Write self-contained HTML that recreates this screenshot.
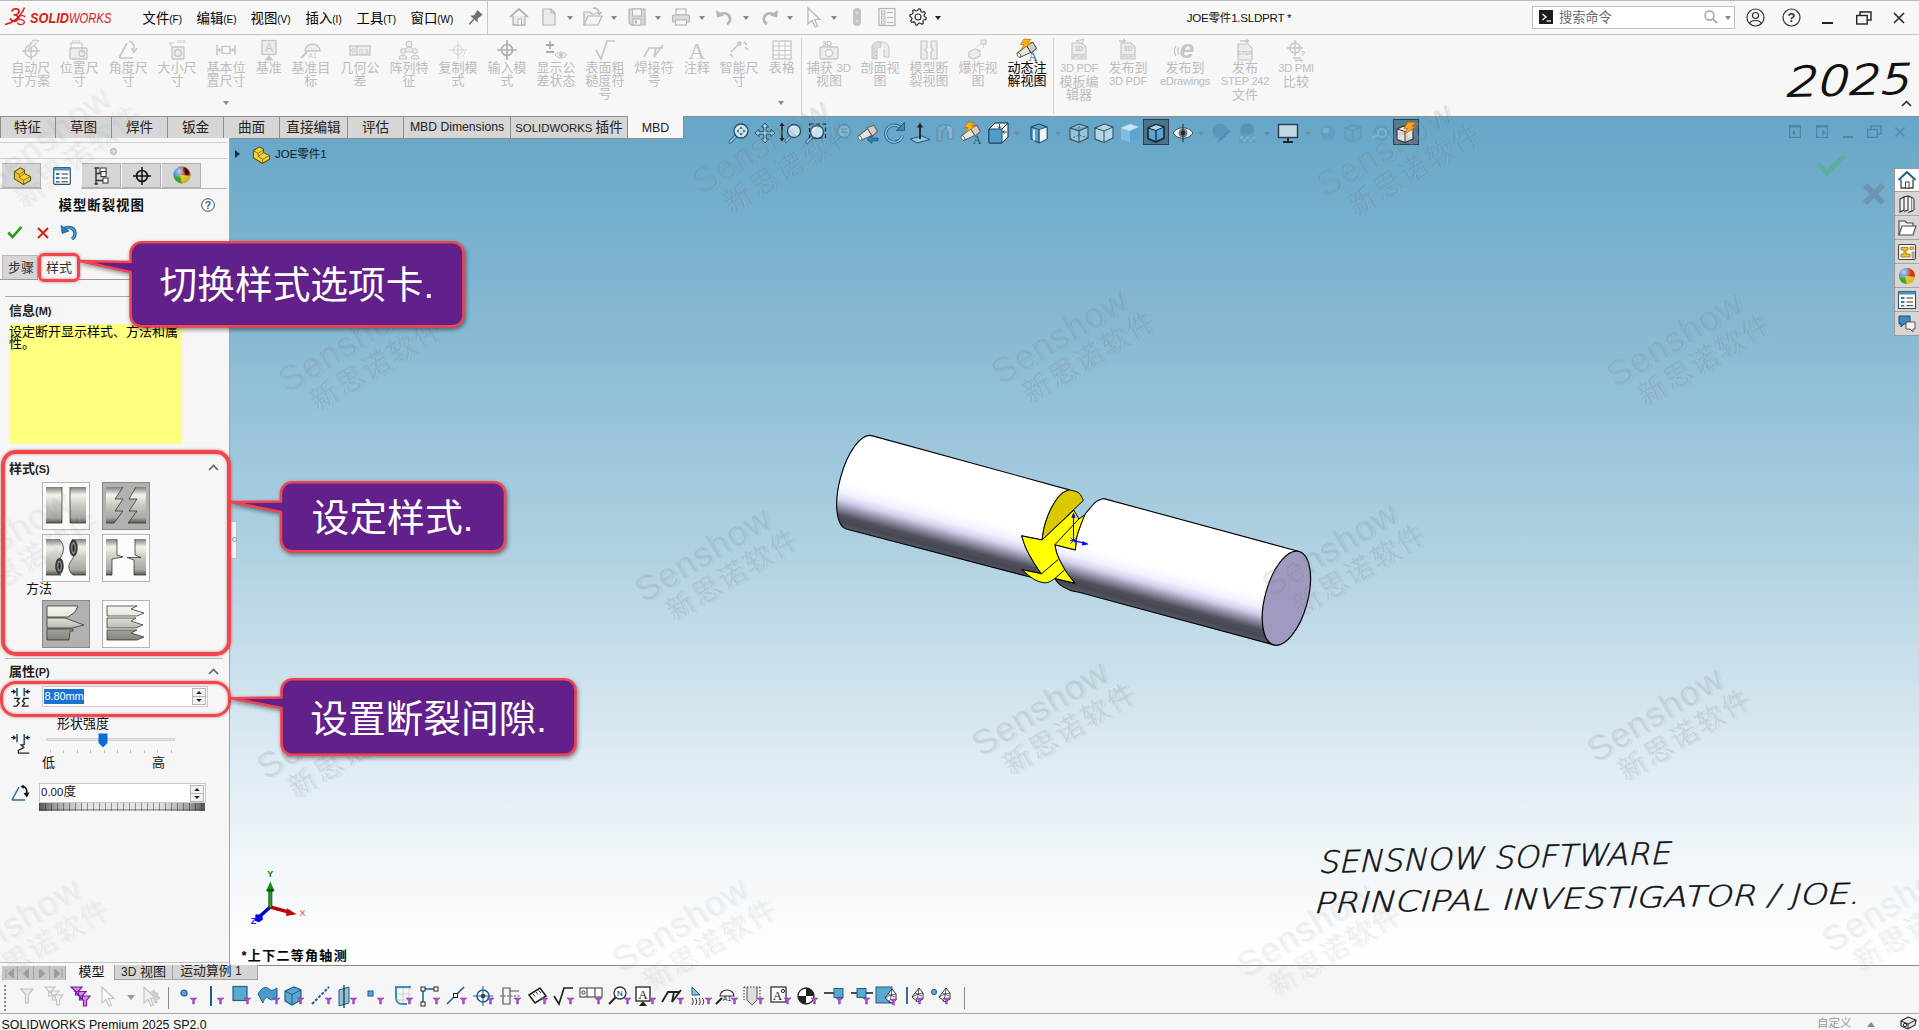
<!DOCTYPE html><html lang="zh-CN"><head><meta charset="utf-8"><title>SOLIDWORKS</title><style>
html,body{margin:0;padding:0}
body{width:1919px;height:1030px;position:relative;overflow:hidden;background:#f7f7f7;font-family:"Liberation Sans","Noto Sans CJK SC",sans-serif;font-size:13px;color:#000;line-height:1}
.a{position:absolute}
.t{position:absolute;white-space:nowrap;line-height:1}
.c{position:absolute;white-space:nowrap;line-height:1;transform:translateX(-50%);text-align:center}
svg{position:absolute;overflow:visible}
.rl{position:absolute;transform:translateX(-50%);text-align:center;white-space:nowrap;font-size:13px;line-height:13px;color:#bdbdbd;top:61px}
.tab{position:absolute;top:116px;height:21px;border:1px solid #8e8e8e;border-left:none;background:#d6d6d6;box-sizing:content-box;text-align:center;font-size:13.6px;line-height:21.5px;color:#222}
.wm{position:absolute;transform:translate(-50%,-50%) rotate(-31deg);text-align:center;white-space:nowrap;font-size:28px;line-height:31px;color:rgba(255,255,255,.09);text-shadow:-1px -1px 0 rgba(60,80,95,.12),1px 1px 0 rgba(60,80,95,.07);pointer-events:none}
.co{position:absolute;background:#62218a;border:2.5px solid #ee4450;border-radius:11px;color:#fff;box-sizing:border-box;box-shadow:2px 3px 5px rgba(0,0,0,.35);white-space:nowrap}
.hl{position:absolute;border:3.5px solid #f4444c;box-sizing:border-box;box-shadow:0 0 3px rgba(120,0,0,.5), inset 0 0 3px rgba(120,0,0,.4)}
</style></head><body>
<div class="a" style="left:229px;top:117px;width:1690px;height:848px;background:linear-gradient(to bottom,#66a6c8 0%,#87b9d3 25%,#aed0e1 50%,#d4e5ef 70%,#e4eff5 80%,#f4f8fb 90%,#ffffff 100%)"></div>
<div class="a" style="left:0;top:0;width:1919px;height:1px;background:#b9b9b9"></div>
<div class="a" style="left:0;top:34px;width:1919px;height:1px;background:#c3c3c3"></div>
<div class="a" style="left:487px;top:1px;width:1px;height:33px;background:#c9c9c9"></div>
<svg style="left:4px;top:3px" width="112" height="26" viewBox="0 0 112 26">
<path d="M1 21.500C8 20.500 17 14 20.500 4.500" fill="none" stroke="#d8201a" stroke-width="1.500"/>
<text x="5" y="19" font-family="Liberation Sans,sans-serif" font-style="italic" font-size="20" fill="#d8201a">3</text>
<text x="12.500" y="21.500" font-family="Liberation Sans,sans-serif" font-style="italic" font-size="14" fill="#d8201a">S</text>
<text x="26" y="20.300" font-family="Liberation Sans,sans-serif" font-style="italic" font-weight="bold" font-size="14" fill="#d8201a" textLength="39" lengthAdjust="spacingAndGlyphs">SOLID</text>
<text x="65" y="20.300" font-family="Liberation Sans,sans-serif" font-style="italic" font-size="14" fill="#d8201a" textLength="42.500" lengthAdjust="spacingAndGlyphs">WORKS</text>
</svg>
<div class="t" style="left:142.5px;top:11.5px;font-size:13.4px">文件<span style="font-size:10px">(F)</span></div>
<div class="t" style="left:196.5px;top:11.5px;font-size:13.4px">编辑<span style="font-size:10px">(E)</span></div>
<div class="t" style="left:250.5px;top:11.5px;font-size:13.4px">视图<span style="font-size:10px">(V)</span></div>
<div class="t" style="left:305.5px;top:11.5px;font-size:13.4px">插入<span style="font-size:10px">(I)</span></div>
<div class="t" style="left:356.5px;top:11.5px;font-size:13.4px">工具<span style="font-size:10px">(T)</span></div>
<div class="t" style="left:410.5px;top:11.5px;font-size:13.4px">窗口<span style="font-size:10px">(W)</span></div>
<div class="c" style="left:1239px;top:12px;font-size:11.6px;letter-spacing:-.25px;color:#111">JOE零件1.SLDPRT *</div>
<div class="a" style="left:1532px;top:6px;width:201px;height:21px;border:1px solid #bdbdbd;background:#fff"></div>
<div class="a" style="left:1539px;top:10px;width:14px;height:14px;background:#1c1c1c"></div>
<div class="t" style="left:1559px;top:11px;font-size:13.2px;color:#6a6a6a">搜索命令</div>
<svg style="left:466.0px;top:8.5px" width="18" height="18" viewBox="0 0 18 18"><g transform="rotate(42 9 9)"><path d="M5.500 1.500H12.500L11.300 7.500L14 10.500H4L6.700 7.500Z" fill="#707070"/><path d="M9 10.500V17.500" stroke="#707070" stroke-width="1.500"/></g></svg>
<svg style="left:507.5px;top:6.0px" width="22" height="22" viewBox="0 0 22 22"><path d="M2 11L11 3L20 11" fill="none" stroke="#b4b4b4" stroke-width="1.800"/><path d="M5 10V19H17V10" fill="#ececec" stroke="#b4b4b4" stroke-width="1.300"/><rect x="10" y="13" width="3.500" height="6" fill="#fff" stroke="#b4b4b4"/></svg>
<svg style="left:538.0px;top:6.0px" width="22" height="22" viewBox="0 0 22 22"><path d="M5 3H13L17 7V19H5Z" fill="#ececec" stroke="#b4b4b4" stroke-width="1.200"/><path d="M13 3V7H17" fill="none" stroke="#b4b4b4"/></svg>
<svg style="left:567px;top:16px" width="6" height="4" viewBox="0 0 6 4"><path d="M0 0H6L3 4Z" fill="#8a8a8a"/></svg>
<svg style="left:581.5px;top:6.0px" width="22" height="22" viewBox="0 0 22 22"><path d="M2 19V6H8L10 8H14" fill="#ececec" stroke="#b4b4b4" stroke-width="1.200"/><path d="M2 19L6 10H20L16 19Z" fill="#f4f4f4" stroke="#b4b4b4" stroke-width="1.200"/><path d="M11 2C15 2 17 4 17 7M14.500 6L17 8.500L19.500 6" fill="none" stroke="#b4b4b4" stroke-width="1.300"/></svg>
<svg style="left:611px;top:16px" width="6" height="4" viewBox="0 0 6 4"><path d="M0 0H6L3 4Z" fill="#8a8a8a"/></svg>
<svg style="left:626.0px;top:6.0px" width="22" height="22" viewBox="0 0 22 22"><path d="M3 3H19V19H5L3 17Z" fill="#d9d9d9" stroke="#b4b4b4" stroke-width="1.200"/><rect x="6.500" y="3" width="9" height="7" fill="#f4f4f4" stroke="#b4b4b4"/><rect x="7" y="13" width="8" height="6" fill="#f4f4f4" stroke="#b4b4b4"/><rect x="9" y="14.500" width="2" height="3" fill="#b4b4b4"/></svg>
<svg style="left:655px;top:16px" width="6" height="4" viewBox="0 0 6 4"><path d="M0 0H6L3 4Z" fill="#8a8a8a"/></svg>
<svg style="left:670.0px;top:6.0px" width="22" height="22" viewBox="0 0 22 22"><rect x="6" y="3" width="10" height="6" fill="#f8f8f8" stroke="#b4b4b4" stroke-width="1.100"/><rect x="2.500" y="9" width="17" height="7" rx="1" fill="#dcdcdc" stroke="#b4b4b4" stroke-width="1.100"/><rect x="5.500" y="14" width="11" height="5" fill="#f8f8f8" stroke="#b4b4b4" stroke-width="1.100"/></svg>
<svg style="left:699px;top:16px" width="6" height="4" viewBox="0 0 6 4"><path d="M0 0H6L3 4Z" fill="#8a8a8a"/></svg>
<svg style="left:714.0px;top:6.0px" width="22" height="22" viewBox="0 0 22 22"><path d="M5 9C9 6 15 7 16 12C16.500 15 15 17 13 18" fill="none" stroke="#b4b4b4" stroke-width="2.600"/><path d="M2 4L3 11.500L10 9.500Z" fill="#b4b4b4"/></svg>
<svg style="left:743px;top:16px" width="6" height="4" viewBox="0 0 6 4"><path d="M0 0H6L3 4Z" fill="#8a8a8a"/></svg>
<svg style="left:758.0px;top:6.0px" width="22" height="22" viewBox="0 0 22 22"><path d="M17 9C13 6 7 7 6 12C5.500 15 7 17 9 18" fill="none" stroke="#b4b4b4" stroke-width="2.600"/><path d="M20 4L19 11.500L12 9.500Z" fill="#b4b4b4"/></svg>
<svg style="left:787px;top:16px" width="6" height="4" viewBox="0 0 6 4"><path d="M0 0H6L3 4Z" fill="#8a8a8a"/></svg>
<svg style="left:801.0px;top:6.0px" width="22" height="22" viewBox="0 0 22 22"><path d="M7 2V18L11 14.500L14 21L16.500 20L13.500 13.500H19Z" fill="#fafafa" stroke="#b4b4b4" stroke-width="1.200"/></svg>
<svg style="left:831px;top:16px" width="6" height="4" viewBox="0 0 6 4"><path d="M0 0H6L3 4Z" fill="#8a8a8a"/></svg>
<svg style="left:846.0px;top:6.0px" width="22" height="22" viewBox="0 0 22 22"><rect x="7" y="2" width="8" height="18" rx="4" fill="#c4c4c4"/><circle cx="11" cy="7" r="1.300" fill="#ddd"/><circle cx="11" cy="15" r="1.300" fill="#ddd"/></svg>
<svg style="left:876.0px;top:6.0px" width="22" height="22" viewBox="0 0 22 22"><rect x="3" y="2.500" width="16" height="17" fill="#f6f6f6" stroke="#b4b4b4" stroke-width="1.200"/><rect x="5.500" y="5" width="3.500" height="3" fill="none" stroke="#b4b4b4"/><rect x="5.500" y="10" width="3.500" height="3" fill="none" stroke="#b4b4b4"/><rect x="5.500" y="15" width="3.500" height="3" fill="none" stroke="#b4b4b4"/><path d="M11 6.500H17M11 11.500H17M11 16.500H17" stroke="#b4b4b4"/></svg>
<svg style="left:906.5px;top:6.0px" width="22" height="22" viewBox="0 0 22 22"><path d="M19.26 11.81L18.94 13.41L16.56 13.97L15.87 15.00L16.27 17.42L14.91 18.32L12.83 17.03L11.62 17.27L10.19 19.26L8.59 18.94L8.03 16.56L7.00 15.87L4.58 16.27L3.68 14.91L4.97 12.83L4.73 11.62L2.74 10.19L3.06 8.59L5.44 8.03L6.13 7.00L5.73 4.58L7.09 3.68L9.17 4.97L10.38 4.73L11.81 2.74L13.41 3.06L13.97 5.44L15.00 6.13L17.42 5.73L18.32 7.09L17.03 9.17L17.27 10.38Z" fill="#fafafa" stroke="#2a2a2a" stroke-width="1.200" stroke-linejoin="round"/><circle cx="11" cy="11" r="3" fill="#fafafa" stroke="#2a2a2a" stroke-width="1.200"/></svg>
<svg style="left:935px;top:16px" width="6" height="4" viewBox="0 0 6 4"><path d="M0 0H6L3 4Z" fill="#222"/></svg>
<svg style="left:1540.500px;top:11.500px" width="11" height="11" viewBox="0 0 11 11"><path d="M1.500 2L5 5L1.500 8" fill="none" stroke="#fff" stroke-width="1.400"/><path d="M5.500 9H10" stroke="#fff" stroke-width="1.300"/></svg>
<svg style="left:1703px;top:9px" width="16" height="16" viewBox="0 0 16 16"><circle cx="6.500" cy="6.500" r="4.500" fill="none" stroke="#9a9a9a" stroke-width="1.300"/><path d="M9.800 9.800L14 14" stroke="#9a9a9a" stroke-width="1.600"/></svg>
<svg style="left:1724.5px;top:16px" width="6" height="4" viewBox="0 0 6 4"><path d="M0 0H6L3 4Z" fill="#888"/></svg>
<svg style="left:1746px;top:8px" width="19" height="19" viewBox="0 0 19 19"><circle cx="9.500" cy="9.500" r="8.500" fill="none" stroke="#333" stroke-width="1.200"/><circle cx="9.500" cy="7.500" r="3" fill="none" stroke="#333" stroke-width="1.200"/><path d="M3.800 15.500C5 11.500 14 11.500 15.200 15.500" fill="none" stroke="#333" stroke-width="1.200"/></svg>
<svg style="left:1782px;top:8px" width="19" height="19" viewBox="0 0 19 19"><circle cx="9.500" cy="9.500" r="8.500" fill="none" stroke="#333" stroke-width="1.200"/><text x="9.500" y="14" font-family="Liberation Sans,sans-serif" font-size="13" font-weight="bold" text-anchor="middle" fill="#333">?</text></svg>
<div class="a" style="left:1822px;top:22px;width:11px;height:2px;background:#222"></div>
<svg style="left:1856px;top:11px" width="16" height="14" viewBox="0 0 16 14"><path d="M4 4V1H15V9H11" fill="none" stroke="#222" stroke-width="1.400"/><rect x=".7" y="4.500" width="10.500" height="8.500" fill="none" stroke="#222" stroke-width="1.400"/></svg>
<svg style="left:1893px;top:12px" width="12" height="12" viewBox="0 0 12 12"><path d="M1 1L11 11M11 1L1 11" stroke="#222" stroke-width="1.500"/></svg>
<svg style="left:1901px;top:100px" width="11" height="7" viewBox="0 0 11 7"><path d="M1 6L5.500 1.500L10 6" fill="none" stroke="#222" stroke-width="1.500"/></svg>
<div class="rl" style="left:30.7px;color:#bdbdbd">自动尺<br>寸方案</div>
<div class="rl" style="left:79.3px;color:#bdbdbd">位置尺<br>寸</div>
<div class="rl" style="left:128.3px;color:#bdbdbd">角度尺<br>寸</div>
<div class="rl" style="left:177px;color:#bdbdbd">大小尺<br>寸</div>
<div class="rl" style="left:226px;color:#bdbdbd">基本位<br>置尺寸</div>
<div class="rl" style="left:268.7px;color:#bdbdbd">基准</div>
<div class="rl" style="left:310.7px;color:#bdbdbd">基准目<br>标</div>
<div class="rl" style="left:360px;color:#bdbdbd">几何公<br>差</div>
<div class="rl" style="left:409px;color:#bdbdbd">阵列特<br>征</div>
<div class="rl" style="left:458px;color:#bdbdbd">复制模<br>式</div>
<div class="rl" style="left:507px;color:#bdbdbd">输入模<br>式</div>
<div class="rl" style="left:556px;color:#bdbdbd">显示公<br>差状态</div>
<div class="rl" style="left:605px;color:#bdbdbd">表面粗<br>糙度符<br>号</div>
<div class="rl" style="left:654px;color:#bdbdbd">焊接符<br>号</div>
<div class="rl" style="left:696.7px;color:#bdbdbd">注释</div>
<div class="rl" style="left:739px;color:#bdbdbd">智能尺<br>寸</div>
<div class="rl" style="left:781.7px;color:#bdbdbd">表格</div>
<div class="rl" style="left:829px;color:#bdbdbd">捕获 <span style="font-size:11.6px">3D</span><br>视图</div>
<div class="rl" style="left:880px;color:#bdbdbd">剖面视<br>图</div>
<div class="rl" style="left:929px;color:#bdbdbd">模型断<br>裂视图</div>
<div class="rl" style="left:978px;color:#bdbdbd">爆炸视<br>图</div>
<div class="rl" style="left:1027px;color:#000">动态注<br>解视图</div>
<div class="rl" style="left:1079px;color:#bdbdbd"><span style="font-size:11.2px;letter-spacing:-.3px">3D PDF</span><br>模板编<br>辑器</div>
<div class="rl" style="left:1128px;color:#bdbdbd">发布到<br><span style="font-size:11.2px;letter-spacing:-.3px">3D PDF</span></div>
<div class="rl" style="left:1185px;color:#bdbdbd">发布到<br><span style="font-size:11.2px;letter-spacing:-.3px">eDrawings</span></div>
<div class="rl" style="left:1245px;color:#bdbdbd">发布<br><span style="font-size:11.2px;letter-spacing:-.3px">STEP 242</span><br>文件</div>
<div class="rl" style="left:1296px;color:#bdbdbd"><span style="font-size:11.2px;letter-spacing:-.3px">3D PMI</span><br>比较</div>
<div class="a" style="left:801px;top:38px;width:1px;height:76px;background:#d0d0d0"></div>
<div class="a" style="left:1053px;top:38px;width:1px;height:76px;background:#d0d0d0"></div>
<svg style="left:18.7px;top:38px" width="24" height="24" viewBox="0 0 24 24"><circle cx="12" cy="13" r="6" fill="none" stroke="#c6c6c6" stroke-width="1.500"/><path d="M12 4V22M3 13H21" stroke="#c6c6c6" stroke-width="1.500"/><path d="M14 2L20 2.500L16 7L9 12Z" fill="#ececec" stroke="#c6c6c6"/></svg>
<svg style="left:67.3px;top:38px" width="24" height="24" viewBox="0 0 24 24"><rect x="3" y="10" width="17" height="11" rx="1" fill="#ececec" stroke="#c6c6c6" stroke-width="1.300"/><circle cx="15" cy="15.500" r="3" fill="none" stroke="#c6c6c6" stroke-width="1.300"/><path d="M15 15.500V5H4V10" fill="none" stroke="#c6c6c6"/><text x="9" y="5" font-size="6" font-family="Liberation Sans,sans-serif" text-anchor="middle" fill="#c6c6c6">xxx</text></svg>
<svg style="left:116.3px;top:38px" width="24" height="24" viewBox="0 0 24 24"><path d="M3 20H17M3 20L11 5" fill="none" stroke="#c6c6c6" stroke-width="1.600"/><path d="M13 3C17 4 18.500 7 18 11M15.500 10L18 14L21 10" fill="none" stroke="#c6c6c6" stroke-width="1.600"/></svg>
<svg style="left:165.0px;top:38px" width="24" height="24" viewBox="0 0 24 24"><rect x="7" y="9" width="12" height="12" rx="1" fill="#ececec" stroke="#c6c6c6" stroke-width="1.300"/><circle cx="13" cy="15" r="3.300" fill="none" stroke="#c6c6c6" stroke-width="1.300"/><path d="M7 9L4 5H9" fill="none" stroke="#c6c6c6"/><text x="16" y="5" font-size="6" font-family="Liberation Sans,sans-serif" text-anchor="middle" fill="#c6c6c6">xxx</text></svg>
<svg style="left:214.0px;top:38px" width="24" height="24" viewBox="0 0 24 24"><path d="M3 7V17M21 7V17M3 12H8M16 12H21" stroke="#c6c6c6" stroke-width="1.500"/><rect x="8" y="8.500" width="8" height="7" fill="none" stroke="#c6c6c6" stroke-width="1.300"/><path d="M3 12l3-2v4zM21 12l-3-2v4z" fill="#c6c6c6"/></svg>
<svg style="left:256.7px;top:38px" width="24" height="24" viewBox="0 0 24 24"><rect x="5" y="2.500" width="14" height="14" fill="#ececec" stroke="#c6c6c6" stroke-width="1.300"/><text x="12" y="14" font-size="12" font-family="Liberation Sans,sans-serif" text-anchor="middle" fill="#c6c6c6">A</text><path d="M12 16.500V19M8.500 22L12 18L15.500 22Z" fill="#c6c6c6" stroke="#c6c6c6"/></svg>
<svg style="left:298.7px;top:38px" width="24" height="24" viewBox="0 0 24 24"><path d="M6 13A7.500 7 0 0 1 21 13Z" fill="#ececec" stroke="#c6c6c6" stroke-width="1.300"/><path d="M8 14L2 20" stroke="#c6c6c6" stroke-width="2"/><text x="13.500" y="19.500" font-size="7" font-family="Liberation Sans,sans-serif" text-anchor="middle" fill="#c6c6c6">A1</text></svg>
<svg style="left:348.0px;top:38px" width="24" height="24" viewBox="0 0 24 24"><rect x="2" y="8" width="20" height="9" fill="#ececec" stroke="#c6c6c6" stroke-width="1.300"/><path d="M9 8V17" stroke="#c6c6c6"/><circle cx="5.500" cy="12.500" r="1.800" fill="none" stroke="#c6c6c6"/><text x="15.500" y="15.500" font-size="7" font-family="Liberation Sans,sans-serif" text-anchor="middle" fill="#c6c6c6">0.3</text></svg>
<svg style="left:397.0px;top:38px" width="24" height="24" viewBox="0 0 24 24"><circle cx="12" cy="6" r="3" fill="#ececec" stroke="#c6c6c6"/><path d="M7 14A5 5 0 0 1 17 14Z" fill="#ececec" stroke="#c6c6c6"/><circle cx="6" cy="13" r="2.500" fill="#ececec" stroke="#c6c6c6"/><circle cx="18" cy="13" r="2.500" fill="#ececec" stroke="#c6c6c6"/><path d="M2 21A4 4 0 0 1 10 21ZM14 21A4 4 0 0 1 22 21Z" fill="#ececec" stroke="#c6c6c6"/></svg>
<svg style="left:446.0px;top:38px;opacity:0.7" width="24" height="24" viewBox="0 0 24 24"><circle cx="12" cy="12" r="4.500" fill="none" stroke="#c6c6c6"/><path d="M12 3V21M3 12H21" stroke="#c6c6c6"/><circle cx="15" cy="15" r="3.500" fill="none" stroke="#c6c6c6" stroke-dasharray="1.500 1"/></svg>
<svg style="left:495.0px;top:38px" width="24" height="24" viewBox="0 0 24 24"><circle cx="12" cy="12" r="5.500" fill="none" stroke="#b0b0b0" stroke-width="1.700"/><path d="M12 2V22M2 12H22" stroke="#b0b0b0" stroke-width="1.700"/></svg>
<svg style="left:544.0px;top:38px" width="24" height="24" viewBox="0 0 24 24"><path d="M6 3V11M2 7H10M2 14H10" stroke="#aaa" stroke-width="1.800"/><path d="M11 17C14 13 20 13 23 17C20 21 14 21 11 17Z" fill="#ececec" stroke="#c6c6c6"/><circle cx="17" cy="17" r="2" fill="#c6c6c6"/></svg>
<svg style="left:593.0px;top:38px" width="24" height="24" viewBox="0 0 24 24"><path d="M3 12L8 21L14 3H22" fill="none" stroke="#c6c6c6" stroke-width="1.700"/></svg>
<svg style="left:642.0px;top:38px" width="24" height="24" viewBox="0 0 24 24"><path d="M2 19L7 10H21M14 10L12 19L21 7" fill="none" stroke="#c6c6c6" stroke-width="1.700"/></svg>
<svg style="left:684.7px;top:38px" width="24" height="24" viewBox="0 0 24 24"><text x="12" y="21" font-size="24" font-family="Liberation Serif,serif" text-anchor="middle" fill="#c6c6c6">A</text></svg>
<svg style="left:727.0px;top:38px" width="24" height="24" viewBox="0 0 24 24"><path d="M4 14L14 4M14 4L10 5M14 4L13 8M18 9L21 12M17 4L20 7" stroke="#c6c6c6" stroke-width="1.600" fill="none"/><path d="M3 16L6 19" stroke="#c6c6c6" stroke-width="1.600"/></svg>
<svg style="left:769.7px;top:38px" width="24" height="24" viewBox="0 0 24 24"><rect x="3" y="3" width="18" height="18" fill="#fafafa" stroke="#c6c6c6" stroke-width="1.300"/><path d="M3 8H21M3 12.500H21M3 17H21M9 3V21M15 3V21" stroke="#c6c6c6"/></svg>
<svg style="left:817.0px;top:38px" width="24" height="24" viewBox="0 0 24 24"><rect x="3" y="9" width="18" height="12" rx="1.500" fill="#ececec" stroke="#c6c6c6" stroke-width="1.300"/><circle cx="12" cy="15" r="3.500" fill="#fafafa" stroke="#c6c6c6" stroke-width="1.300"/><text x="10" y="8" font-size="8" font-weight="bold" font-family="Liberation Sans,sans-serif" text-anchor="middle" fill="#c6c6c6">3D</text></svg>
<svg style="left:868.0px;top:38px" width="24" height="24" viewBox="0 0 24 24"><path d="M4 10C4 5 9 3 13 4V9C11 9 9 10 9 12V21H4Z" fill="#dedede" stroke="#c6c6c6"/><path d="M13 4C18 4 21 7 21 10V19H16V11" fill="#ececec" stroke="#c6c6c6"/><path d="M5 12l3-3M5 16l3-3M5 20l3-3" stroke="#c6c6c6"/></svg>
<svg style="left:917.0px;top:38px" width="24" height="24" viewBox="0 0 24 24"><path d="M4 3H10V9L8 12L10 14V21H4Z" fill="#ececec" stroke="#c6c6c6" stroke-width="1.200"/><path d="M20 3H14V9L16 12L14 14V21H20Z" fill="#ececec" stroke="#c6c6c6" stroke-width="1.200"/></svg>
<svg style="left:966.0px;top:38px" width="24" height="24" viewBox="0 0 24 24"><path d="M3 14L9 11L14 13V18L8 21L3 19Z" fill="#ececec" stroke="#c6c6c6" stroke-width="1.200"/><rect x="15" y="2" width="5" height="4" fill="#ececec" stroke="#c6c6c6"/><path d="M17.500 6V10M11 9L14 6" stroke="#c6c6c6" stroke-dasharray="1.500 1"/></svg>
<svg style="left:1015.0px;top:38px" width="24" height="24" viewBox="0 0 24 24"><g transform="rotate(-32 12 12)"><path d="M2 9.500L14 8V16L2 14.500Z" fill="#e6e6e0" stroke="#444" stroke-width=".9"/><path d="M14 7L21 8.500V15.500L14 17Z" fill="#cfcfc8" stroke="#444" stroke-width=".9"/><ellipse cx="2.500" cy="12" rx="1.600" ry="2.600" fill="#fff" stroke="#444" stroke-width=".8"/></g><path d="M9 1L16 1.500L12.500 5H16.500L6 12L9 6.500H5.500Z" fill="#f6b21a" stroke="#b06a00" stroke-width=".7"/><text x="18" y="23" font-family="Liberation Serif,serif" font-size="13" text-anchor="middle" fill="#1d5d8e">A</text></svg>
<svg style="left:1067.0px;top:38px" width="24" height="24" viewBox="0 0 24 24"><path d="M5 5H15L19 9V21H5Z" fill="#ececec" stroke="#c6c6c6" stroke-width="1.200"/><path d="M9 3L17 1L15 6Z" fill="#ececec" stroke="#c6c6c6"/><text x="12" y="13" font-size="6.500" font-weight="bold" font-family="Liberation Sans,sans-serif" text-anchor="middle" fill="#c6c6c6">3D</text><text x="12" y="19.500" font-size="6" font-weight="bold" font-family="Liberation Sans,sans-serif" text-anchor="middle" fill="#c6c6c6">PDF</text></svg>
<svg style="left:1116.0px;top:38px" width="24" height="24" viewBox="0 0 24 24"><path d="M5 5H15L19 9V21H5Z" fill="#ececec" stroke="#c6c6c6" stroke-width="1.200"/><path d="M3 3H9M7 1L9.500 3L7 5" fill="none" stroke="#c6c6c6" stroke-width="1.300"/><text x="12" y="13" font-size="6.500" font-weight="bold" font-family="Liberation Sans,sans-serif" text-anchor="middle" fill="#c6c6c6">3D</text><text x="12" y="19.500" font-size="6" font-weight="bold" font-family="Liberation Sans,sans-serif" text-anchor="middle" fill="#c6c6c6">PDF</text></svg>
<svg style="left:1173.0px;top:38px" width="24" height="24" viewBox="0 0 24 24"><text x="14" y="20" font-size="26" font-style="italic" font-weight="bold" font-family="Liberation Sans,sans-serif" text-anchor="middle" fill="#c6c6c6">e</text><path d="M3 8C1 11 1 15 3 18M6 9C4.500 11.500 4.500 14.500 6 17" fill="none" stroke="#c6c6c6" stroke-width="1.200"/></svg>
<svg style="left:1233.0px;top:38px" width="24" height="24" viewBox="0 0 24 24"><path d="M5 6H15L19 10V22H5Z" fill="#ececec" stroke="#c6c6c6" stroke-width="1.200"/><path d="M7 3H15M13 1L15.500 3L13 5" fill="none" stroke="#c6c6c6" stroke-width="1.300"/><text x="12" y="17" font-size="6" font-weight="bold" font-family="Liberation Sans,sans-serif" text-anchor="middle" fill="#c6c6c6">STEP</text></svg>
<svg style="left:1284.0px;top:38px" width="24" height="24" viewBox="0 0 24 24"><circle cx="11" cy="10" r="5" fill="none" stroke="#c6c6c6" stroke-width="1.400"/><path d="M11 2V18M3 10H19" stroke="#c6c6c6" stroke-width="1.400"/><path d="M9 20H17M11 22.500H19" stroke="#c6c6c6" stroke-width="1.400"/><text x="19" y="18" font-size="8" font-weight="bold" font-family="Liberation Sans,sans-serif" text-anchor="middle" fill="#c6c6c6">?</text></svg>
<svg style="left:223px;top:101px" width="6" height="4" viewBox="0 0 6 4"><path d="M0 0H6L3 4Z" fill="#8a8a8a"/></svg>
<svg style="left:778px;top:101px" width="6" height="4" viewBox="0 0 6 4"><path d="M0 0H6L3 4Z" fill="#8a8a8a"/></svg>
<div class="a" style="left:0;top:116px;width:683px;height:22px;background:#f7f7f7"></div>
<div class="tab" style="left:0px;width:55px;font-size:13.6px">特征</div>
<div class="tab" style="left:56px;width:55px;font-size:13.6px">草图</div>
<div class="tab" style="left:112px;width:55px;font-size:13.6px">焊件</div>
<div class="tab" style="left:168px;width:55px;font-size:13.6px">钣金</div>
<div class="tab" style="left:224px;width:55px;font-size:13.6px">曲面</div>
<div class="tab" style="left:280px;width:67px;font-size:13.6px">直接编辑</div>
<div class="tab" style="left:348px;width:55px;font-size:13.6px">评估</div>
<div class="tab" style="left:404px;width:106px;font-size:12.2px">MBD Dimensions</div>
<div class="tab" style="left:511px;width:116px;font-size:11.4px">SOLIDWORKS <span style=font-size:13.6px>插件</span></div>
<div class="a" style="left:0;top:116px;width:1px;height:22px;background:#8e8e8e"></div>
<div class="a" style="left:628px;top:116px;width:55px;height:22px;background:#f7f7f7;text-align:center;line-height:24px;font-size:12.4px;color:#222;border-right:1px solid #8e8e8e;border-bottom:1px solid #8e8e8e;box-sizing:content-box">MBD</div>
<div class="a" style="left:683px;top:116px;width:1236px;height:1px;background:#8f8f8f"></div>
<div class="a" style="left:0;top:138px;width:229px;height:826px;background:#f6f6f6"></div>
<div class="a" style="left:229px;top:138px;width:1px;height:826px;background:#8fa9b6"></div>
<div class="a" style="left:0;top:138px;width:229px;height:2px;background:#5f9fc0;opacity:.0"></div>
<div class="a" style="left:0;top:142px;width:227px;height:1px;background:#cfcfcf"></div>
<div class="a" style="left:0;top:158px;width:227px;height:1px;background:#cfcfcf"></div>
<div class="a" style="left:110px;top:148px;width:5px;height:5px;border-radius:50%;border:1px solid #a8a8a8;background:#dcdcdc;box-sizing:content-box"></div>
<div class="a" style="left:0;top:188px;width:227px;height:1px;background:#b5b5b5"></div>
<div class="a" style="left:2px;top:163px;width:39px;height:25px;background:#d6d6d6;border:1px solid #b0b0b0;border-left:none;box-sizing:border-box"></div>
<div class="a" style="left:42px;top:163px;width:39px;height:26px;background:#f6f6f6"></div>
<div class="a" style="left:82px;top:163px;width:39px;height:25px;background:#d6d6d6;border:1px solid #b0b0b0;border-left:none;box-sizing:border-box"></div>
<div class="a" style="left:122px;top:163px;width:39px;height:25px;background:#d6d6d6;border:1px solid #b0b0b0;border-left:none;box-sizing:border-box"></div>
<div class="a" style="left:162px;top:163px;width:39px;height:25px;background:#d6d6d6;border:1px solid #b0b0b0;border-left:none;box-sizing:border-box"></div>
<svg style="left:13px;top:166px" width="19" height="19" viewBox="0 0 20 20"><path d="M1.500 6L7.500 2L12 4.200V8L18.500 11.200V15L11 19.500L1.500 13.500Z" fill="#f4d23e" stroke="#5e4d08" stroke-width="1.100" stroke-linejoin="round"/><path d="M1.500 6L6.500 8.800L12 5.200M6.500 8.800V12L11 15L18.500 11.200M11 15V19.500M6.500 12L12 8" fill="none" stroke="#7a6510" stroke-width=".9"/><path d="M2.300 7.500L6 9.500V12.500L10.300 15.500V18.300L2.300 13.200Z" fill="#e0b820" opacity=".55"/></svg>
<svg style="left:53px;top:167px" width="18" height="18" viewBox="0 0 18 18"><rect x=".7" y=".7" width="16.6" height="16.6" rx="1" fill="#fff" stroke="#2b4d66" stroke-width="1.2"/><rect x=".7" y=".7" width="16.6" height="2.8" fill="#4d8fbf"/><rect x="3" y="6" width="3.5" height="2" fill="#2f78ad"/><rect x="3" y="10" width="3.5" height="2" fill="#2f78ad"/><rect x="3" y="14" width="3.5" height="1.6" fill="#2f78ad"/><path d="M8.5 7H15M8.5 11H15M8.5 14.8H15" stroke="#333" stroke-width="1"/></svg>
<svg style="left:94px;top:167px" width="16" height="18" viewBox="0 0 16 18"><path d="M2 .5V17.5M.5 1H5M.5 17H4M2 6.5H7M2 13.5H9" stroke="#333" stroke-width="1.4" fill="none"/><rect x="6" y="1" width="6" height="5" fill="#fff" stroke="#333"/><rect x="7" y="4.5" width="5" height="5" fill="#fff" stroke="#333"/><rect x="9" y="11" width="5" height="5" fill="#fff" stroke="#333"/></svg>
<svg style="left:133px;top:167px" width="18" height="18" viewBox="0 0 18 18"><circle cx="9" cy="9" r="5.5" fill="none" stroke="#111" stroke-width="1.7"/><path d="M9 0V18M0 9H18" stroke="#111" stroke-width="1.5"/></svg>
<svg style="left:173px;top:166px" width="18" height="18" viewBox="0 0 18 18"><defs><clipPath id="cb1"><circle cx="9" cy="9" r="8.5"/></clipPath><radialGradient id="cbg" cx=".35" cy=".3" r=".8"><stop offset="0" stop-color="#fff" stop-opacity=".7"/><stop offset=".5" stop-color="#fff" stop-opacity="0"/><stop offset="1" stop-color="#000" stop-opacity=".3"/></radialGradient></defs><g clip-path="url(#cb1)"><rect width="18" height="18" fill="#e8c020"/><path d="M0 0H9V9L0 10Z" fill="#2a6fd0"/><path d="M9 0H18V10L9 9Z" fill="#d02a20"/><path d="M0 10L7 9L9 18H0Z" fill="#38a030"/><ellipse cx="13" cy="5.5" rx="2.2" ry="4" transform="rotate(-35 13 5.5)" fill="#111"/><rect width="18" height="18" fill="url(#cbg)"/></g></svg>
<div class="t" style="left:58.5px;top:199.2px;font-size:13.4px;font-weight:bold;letter-spacing:1px;color:#111">模型断裂视图</div>
<svg style="left:201px;top:198px" width="14" height="14" viewBox="0 0 14 14"><circle cx="7" cy="7" r="6.3" fill="#fdfdfd" stroke="#444" stroke-width="1"/><text x="7" y="10.6" text-anchor="middle" font-family="Liberation Sans,sans-serif" font-weight="bold" font-size="10.5" fill="#2a6a9a">?</text></svg>
<svg style="left:7px;top:225px" width="16" height="14" viewBox="0 0 16 14"><path d="M1.2 7.5L5.5 12L14.5 1.8" fill="none" stroke="#2e9a1f" stroke-width="2.6"/></svg>
<svg style="left:37px;top:227px" width="12" height="12" viewBox="0 0 12 12"><path d="M1 1L11 11M11 1L1 11" stroke="#d81e10" stroke-width="2"/></svg>
<svg style="left:60px;top:224px" width="18" height="16" viewBox="0 0 18 16"><path d="M4.5 4.5C9 2 14.5 4 15 9C15.3 11.5 14 13.5 12 15" fill="none" stroke="#1d5c94" stroke-width="3.4"/><path d="M4.5 4.5C9 2 14.5 4 15 9C15.3 11.5 14 13.5 12 15" fill="none" stroke="#4a9ad0" stroke-width="1.6"/><path d="M1 1.5L2.2 9.5L9 7Z" fill="#2a7abc" stroke="#1d5c94" stroke-width=".8"/></svg>
<div class="a" style="left:0;top:279px;width:227px;height:1px;background:#9a9a9a"></div>
<div class="a" style="left:2px;top:255px;width:36px;height:24px;background:#d6d6d6;border:1px solid #b8b8b8;border-bottom:none;box-sizing:border-box"></div>
<div class="t" style="left:8px;top:261px;font-size:13px;color:#333">步骤</div>
<div class="a" style="left:38px;top:255px;width:41px;height:25px;background:#f6f6f6"></div>
<div class="t" style="left:46px;top:261px;font-size:13px;color:#333">样式</div>
<div class="a" style="left:5px;top:296px;width:218px;height:1px;background:#a9a9a9"></div>
<div class="t" style="left:9px;top:304px;font-size:13px;font-weight:bold;color:#222">信息<span style="font-size:11px">(M)</span></div>
<div class="a" style="left:9px;top:324px;width:173px;height:120px;background:#ffff80"></div>
<div class="a" style="left:9px;top:326px;width:176px;font-size:13px;line-height:12.2px;color:#000;letter-spacing:0">设定断开显示样式、方法和属性。</div>
<div class="t" style="left:9px;top:462px;font-size:13px;font-weight:bold;color:#222">样式<span style="font-size:11px">(S)</span></div>
<svg style="left:208px;top:464px" width="11" height="7" viewBox="0 0 11 7"><path d="M1 6L5.5 1.5L10 6" fill="none" stroke="#666" stroke-width="1.7"/></svg>
<svg width="0" height="0" style="left:0;top:0"><defs>
<linearGradient id="mg" x1="0" y1="0" x2="0" y2="1"><stop offset="0" stop-color="#7f7f78"/><stop offset=".22" stop-color="#f4f4ec"/><stop offset=".5" stop-color="#c9cac2"/><stop offset=".85" stop-color="#a9aaa2"/><stop offset="1" stop-color="#5a5a54"/></linearGradient>
<linearGradient id="m1" x1="0" y1="0" x2="0" y2="1"><stop offset="0" stop-color="#f6f6ee"/><stop offset="1" stop-color="#e6e6dc"/></linearGradient>
<linearGradient id="m2" x1="0" y1="0" x2="0" y2="1"><stop offset="0" stop-color="#dfe0d8"/><stop offset="1" stop-color="#b9bab2"/></linearGradient>
<linearGradient id="m3" x1="0" y1="0" x2="0" y2="1"><stop offset="0" stop-color="#a3a39c"/><stop offset="1" stop-color="#84847e"/></linearGradient>
</defs></svg>
<svg style="left:42px;top:482px" width="48" height="48" viewBox="0 0 48 48"><rect x=".5" y=".5" width="47" height="47" fill="#fbfbfb" stroke="#b4b4b4"/><path d="M4 5H20V41H4" fill="url(#mg)"/><path d="M44 5H28V41H44" fill="url(#mg)"/><path d="M20 5V41M28 5V41" stroke="#222" stroke-width=".7" fill="none"/><path d="M4 41H20M28 41H44" stroke="#333" stroke-width=".8"/></svg>
<svg style="left:102px;top:482px" width="48" height="48" viewBox="0 0 48 48"><rect x=".5" y=".5" width="47" height="47" fill="#b1b1b1" stroke="#8a8a8a"/><path d="M4 5H21L13 17H21L13 29H21L12 41H4Z" fill="url(#mg)"/><path d="M44 5H34L27 17H35L27 29H35L26 41H44Z" fill="url(#mg)"/><path d="M21 5L13 17H21L13 29H21L12 41M34 5L27 17H35L27 29H35L26 41" stroke="#222" stroke-width=".7" fill="none"/><path d="M4 41H12M26 41H44" stroke="#333" stroke-width=".8"/></svg>
<svg style="left:42px;top:534px" width="48" height="48" viewBox="0 0 48 48"><rect x=".5" y=".5" width="47" height="47" fill="#fbfbfb" stroke="#b4b4b4"/><path d="M4 5H17C24 12 22 20 16 27C12 32 14 38 19 41H4Z" fill="url(#mg)"/><path d="M44 5H30C36 12 34 20 29 27C25 32 27 38 31 41H44Z" fill="url(#mg)"/><path d="M17 5C24 12 22 20 16 27C12 32 14 38 19 41M30 5C36 12 34 20 29 27C25 32 27 38 31 41" stroke="#222" stroke-width=".7" fill="none"/><ellipse cx="31.5" cy="14" rx="4.2" ry="8.5" fill="#3a3a3a"/><ellipse cx="31.5" cy="14" rx="2.4" ry="6" fill="#8a8a8a"/><ellipse cx="31.5" cy="14" rx="1" ry="4" fill="#222"/><ellipse cx="17.5" cy="32" rx="4.2" ry="8" fill="#3a3a3a"/><ellipse cx="17.5" cy="32" rx="2.4" ry="5.5" fill="#8a8a8a"/><ellipse cx="17.5" cy="32" rx="1" ry="3.5" fill="#222"/><path d="M4 41H19M31 41H44" stroke="#333" stroke-width=".8"/></svg>
<svg style="left:102px;top:534px" width="48" height="48" viewBox="0 0 48 48"><rect x=".5" y=".5" width="47" height="47" fill="#fbfbfb" stroke="#b4b4b4"/><path d="M4 5H15V21L21 23L10 25V41H4Z" fill="url(#mg)"/><path d="M44 5H33V21L39 23.5H25L32 26V41H44Z" fill="url(#mg)"/><path d="M15 5V21L21 23L10 25V41M33 5V21L39 23.5H25L32 26V41" stroke="#222" stroke-width=".7" fill="none"/><path d="M4 41H10M32 41H44" stroke="#333" stroke-width=".8"/></svg>
<svg style="left:42px;top:600px" width="48" height="48" viewBox="0 0 48 48"><rect x=".5" y=".5" width="47" height="47" fill="#b1b1b1" stroke="#8a8a8a"/><path d="M5 6H36L33 12L26 17H5Z" fill="url(#m1)" stroke="#222" stroke-width=".7"/><path d="M5 18H23L42 25L30 28H5Z" fill="url(#m2)" stroke="#222" stroke-width=".7"/><path d="M5 29H31V31H28L27 40H5Z" fill="url(#m3)" stroke="#222" stroke-width=".7"/></svg>
<svg style="left:102px;top:600px" width="48" height="48" viewBox="0 0 48 48"><rect x=".5" y=".5" width="47" height="47" fill="#fbfbfb" stroke="#b4b4b4"/><path d="M5 6H35L29 9L42 13L35 16H5Z" fill="url(#m1)" stroke="#222" stroke-width=".7"/><path d="M5 18H34L29 21L41 25L34 28H5Z" fill="url(#m2)" stroke="#222" stroke-width=".7"/><path d="M5 30H35L29 33L42 37L35 40H5Z" fill="url(#m3)" stroke="#222" stroke-width=".7"/></svg>
<div class="t" style="left:26px;top:582px;font-size:13px;color:#111">方法</div>
<div class="a" style="left:5px;top:658px;width:218px;height:1px;background:#b9b9b9"></div>
<div class="t" style="left:9px;top:665px;font-size:13px;font-weight:bold;color:#222">属性<span style="font-size:11px">(P)</span></div>
<svg style="left:208px;top:668px" width="11" height="7" viewBox="0 0 11 7"><path d="M1 6L5.5 1.5L10 6" fill="none" stroke="#666" stroke-width="1.7"/></svg>
<div class="a" style="left:42px;top:686px;width:166px;height:21px;border:1px solid #c9c9c9;background:#fff;box-sizing:border-box"></div>
<div class="t" style="left:43.5px;top:688.5px;height:15px;background:#1874d2;color:#fff;font-size:11px;line-height:15px;padding:0 .5px 0 1px;letter-spacing:-.1px">8.80mm</div>
<svg style="left:192px;top:688px" width="14" height="17" viewBox="0 0 14 17"><rect x=".5" y=".5" width="13" height="16" fill="#f3f3f3" stroke="#b5b5b5"/><path d="M.5 8.5H13.5" stroke="#b5b5b5"/><path d="M4.2 6L7 3L9.8 6Z M4.2 11L7 14L9.8 11Z" fill="#222"/></svg>
<svg style="left:10.500px;top:688px" width="22" height="20" viewBox="0 0 24 22"><path d="M6.500 0V9M14.500 0V9" stroke="#1d5f85" stroke-width="1.800"/><g stroke="#222" stroke-width="1.400" fill="none"><path d="M0 4H4M21 4H17"/><path d="M3 11.5H9L6.5 14.5L9 16.5L6 20H2.5M13 11.5H19.5M19.5 20H12.5L15 16.5L12.5 14.5L15 11.5"/></g><path d="M2 1.500L6 4L2 6.500ZM19 1.500L15 4L19 6.500Z" fill="#222"/></svg>
<div class="t" style="left:57px;top:717px;font-size:13px;color:#111">形状强度</div>
<svg style="left:10.500px;top:734px" width="22" height="20" viewBox="0 0 24 22"><path d="M6.500 0V9M14.500 0V12" stroke="#1d5f85" stroke-width="1.800"/><g stroke="#222" stroke-width="1.400" fill="none"><path d="M0 4H4M21 4H17"/><path d="M14.500 12H11L14 15L8 18V21H20"/></g><path d="M2 1.500L6 4L2 6.500ZM19 1.500L15 4L19 6.500Z" fill="#222"/></svg>
<div class="a" style="left:46px;top:738px;width:129px;height:3px;background:#e3e3e3;border:1px solid #d3d3d3;box-sizing:border-box"></div>
<svg style="left:98px;top:733px" width="10" height="15" viewBox="0 0 10 15"><path d="M.5 .5H9.5V10L5 14.5L.5 10Z" fill="#0a6cd6"/></svg>
<div class="a" style="left:50.0px;top:750px;width:1px;height:3px;background:#c4c4c4"></div><div class="a" style="left:63.4px;top:750px;width:1px;height:3px;background:#c4c4c4"></div><div class="a" style="left:76.8px;top:750px;width:1px;height:3px;background:#c4c4c4"></div><div class="a" style="left:90.2px;top:750px;width:1px;height:3px;background:#c4c4c4"></div><div class="a" style="left:103.6px;top:750px;width:1px;height:3px;background:#c4c4c4"></div><div class="a" style="left:117.0px;top:750px;width:1px;height:3px;background:#c4c4c4"></div><div class="a" style="left:130.4px;top:750px;width:1px;height:3px;background:#c4c4c4"></div><div class="a" style="left:143.8px;top:750px;width:1px;height:3px;background:#c4c4c4"></div><div class="a" style="left:157.2px;top:750px;width:1px;height:3px;background:#c4c4c4"></div><div class="a" style="left:170.6px;top:750px;width:1px;height:3px;background:#c4c4c4"></div>
<div class="t" style="left:42px;top:756px;font-size:13px;color:#111">低</div>
<div class="t" style="left:152px;top:756px;font-size:13px;color:#111">高</div>
<div class="a" style="left:39px;top:783px;width:167px;height:20px;border:1px solid #c9c9c9;background:#fff;box-sizing:border-box"></div>
<div class="t" style="left:41px;top:786px;font-size:11.5px;color:#111">0.00<span style="font-size:12.5px">度</span></div>
<svg style="left:190px;top:784.5px" width="14" height="17" viewBox="0 0 14 17"><rect x=".5" y=".5" width="13" height="16" fill="#f3f3f3" stroke="#b5b5b5"/><path d="M.5 8.5H13.5" stroke="#b5b5b5"/><path d="M4.2 6L7 3L9.8 6Z M4.2 11L7 14L9.8 11Z" fill="#222"/></svg>
<div class="a" style="left:39px;top:803px;width:166px;height:8px;background:repeating-linear-gradient(to right,#8a8a8a 0,#8a8a8a 1.500px,#e4e4e4 1.500px,#e4e4e4 6px)"></div>
<div class="a" style="left:39px;top:803px;width:166px;height:8px;background:linear-gradient(to right,rgba(40,40,40,.75) 0,rgba(40,40,40,.35) 10%,rgba(40,40,40,0) 28%,rgba(40,40,40,0) 72%,rgba(40,40,40,.35) 90%,rgba(40,40,40,.75) 100%)"></div>
<div class="a" style="left:39px;top:809px;width:166px;height:2px;background:linear-gradient(to bottom,rgba(60,60,60,.5),rgba(60,60,60,.1))"></div>
<svg style="left:11px;top:785px" width="20" height="16" viewBox="0 0 20 16"><path d="M1 15H14M1 15L8 2" stroke="#2a6d9c" stroke-width="1.5" fill="none"/><path d="M11 1C15 1.5 16.5 5 15.5 9" stroke="#111" stroke-width="1.6" fill="none"/><path d="M12.5 8L15.8 12.5L18.5 7.5Z" fill="#111"/><path d="M13 0L9.5 1.5L12.5 4Z" fill="#111"/></svg>
<div class="a" style="left:231px;top:521px;width:6px;height:38px;background:#f2f5f7;border:1px solid #b5c4cc;border-left:none;box-sizing:border-box"></div>
<div class="a" style="left:232px;top:537px;width:3px;height:3px;border-radius:50%;border:1px solid #999"></div>
<div class="a" style="left:0;top:965px;width:1919px;height:65px;background:#f5f5f5"></div>
<div class="a" style="left:229px;top:965px;width:1690px;height:1px;background:#8a8a8a"></div>
<div class="a" style="left:0;top:1013px;width:1919px;height:1px;background:#a8a8a8"></div>
<div class="a" style="left:0;top:962px;width:229px;height:1px;background:#c2c2c2"></div>
<div class="a" style="left:2px;top:966px;width:64px;height:14px;background:#c6c6c6"></div>
<div class="a" style="left:17px;top:966px;width:1px;height:14px;background:#a5a5a5"></div>
<div class="a" style="left:33px;top:966px;width:1px;height:14px;background:#a5a5a5"></div>
<div class="a" style="left:49px;top:966px;width:1px;height:14px;background:#a5a5a5"></div>
<div class="a" style="left:65px;top:966px;width:1px;height:14px;background:#a5a5a5"></div>
<svg style="left:2px;top:965.5px" width="16" height="15" viewBox="0 0 16 15"><path d="M4 3V12M11.5 3L6 7.5L11.5 12Z" fill="#9d9d9d" stroke="#9d9d9d" stroke-width="1"/></svg>
<svg style="left:18px;top:965.5px" width="16" height="15" viewBox="0 0 16 15"><path d="M10.5 3L5 7.5L10.5 12Z" fill="#9d9d9d" stroke="#9d9d9d" stroke-width="1"/></svg>
<svg style="left:34px;top:965.5px" width="16" height="15" viewBox="0 0 16 15"><path d="M5.5 3L11 7.5L5.5 12Z" fill="#9d9d9d" stroke="#9d9d9d" stroke-width="1"/></svg>
<svg style="left:50px;top:965.5px" width="16" height="15" viewBox="0 0 16 15"><path d="M12 3V12M4.5 3L10 7.5L4.5 12Z" fill="#9d9d9d" stroke="#9d9d9d" stroke-width="1"/></svg>
<div class="a" style="left:66px;top:965px;width:48px;height:16px;background:#f5f5f5"></div>
<div class="c" style="left:91.5px;top:965px;font-size:13px;color:#111">模型</div>
<div class="a" style="left:114px;top:965px;width:59px;height:15px;background:#d4d4d4;border:1px solid #a2a2a2;border-top:none;box-sizing:border-box"></div>
<div class="c" style="left:143.5px;top:965px;font-size:13px;color:#222"><span style="font-size:12px">3D</span> 视图</div>
<div class="a" style="left:173px;top:965px;width:85px;height:15px;background:#d4d4d4;border:1px solid #a2a2a2;border-top:none;border-left:none;box-sizing:border-box"></div>
<div class="c" style="left:211px;top:965px;font-size:12.8px;color:#222">运动算例 <span style="font-size:12px">1</span></div>
<div class="a" style="left:4px;top:985px;width:2px;height:2px;background:#8a8a8a"></div>
<div class="a" style="left:4px;top:989px;width:2px;height:2px;background:#8a8a8a"></div>
<div class="a" style="left:4px;top:993px;width:2px;height:2px;background:#8a8a8a"></div>
<div class="a" style="left:4px;top:997px;width:2px;height:2px;background:#8a8a8a"></div>
<div class="a" style="left:4px;top:1001px;width:2px;height:2px;background:#8a8a8a"></div>
<div class="a" style="left:4px;top:1005px;width:2px;height:2px;background:#8a8a8a"></div>
<div class="a" style="left:4px;top:1009px;width:2px;height:2px;background:#8a8a8a"></div>
<div class="a" style="left:168px;top:987px;width:1px;height:22px;background:#8a8a8a"></div>
<div class="a" style="left:964px;top:987px;width:1px;height:22px;background:#8a8a8a"></div>
<div class="t" style="left:1.5px;top:1018.6px;font-size:12.4px;color:#111">SOLIDWORKS Premium 2025 SP2.0</div>
<div class="t" style="left:1817px;top:1018px;font-size:11.5px;color:#9a9a9a">自定义</div>
<svg style="left:1867px;top:1022px" width="8" height="5" viewBox="0 0 8 5"><path d="M0 5L4 0L8 5Z" fill="#8a8a8a"/></svg>
<svg style="left:1899px;top:1016px" width="18" height="14" viewBox="0 0 18 14"><path d="M2 5L9 1L17 4L16 9L9 13L2 10Z" fill="#e8e8e8" stroke="#222" stroke-width="1.1"/><path d="M2 5L9 8L17 4M9 8V13" stroke="#222" fill="none"/><circle cx="6" cy="9" r="1.6" fill="#fff" stroke="#222"/></svg>
<svg style="left:14.0px;top:984px" width="26" height="26" viewBox="0 0 26 26"><path d="M7 5H19L14.5 10.5V19H11.5V10.5Z" fill="#ececec" stroke="#c2c2c2" stroke-width="1.2"/></svg>
<svg style="left:41.0px;top:984px" width="26" height="26" viewBox="0 0 26 26"><path d="M4 3H14L10.5 7V12H7.5V7Z M8 7H18L14.5 11V16H11.5V11Z M12 11H22L18.5 15.5V21H15.5V15.5Z" fill="#f2f2f2" stroke="#c2c2c2" stroke-width="1.1"/></svg>
<svg style="left:68.0px;top:984px" width="26" height="26" viewBox="0 0 26 26"><path d="M3 3H14L10.5 7V11H7.5V7Z M7 7.5H18L14.5 11.5V16H11.5V11.5Z M11 12H22L18.5 16.5V22H15.5V16.5Z" fill="#d98cf0" stroke="#7a1fa0" stroke-width="1.2"/></svg>
<svg style="left:95.0px;top:984px" width="26" height="26" viewBox="0 0 26 26"><path d="M7 3V19L11 15.5L14 22L16.5 21L13.5 14.5H19Z" fill="#fafafa" stroke="#c2c2c2" stroke-width="1.1"/></svg>
<svg style="left:127px;top:995px" width="8" height="5" viewBox="0 0 8 5"><path d="M0 0H8L4 5Z" fill="#999"/></svg>
<svg style="left:139.0px;top:984px" width="26" height="26" viewBox="0 0 26 26"><path d="M5 3V19L9 15.5L12 22L14.5 21L11.5 14.5H17Z" fill="#f0f0f0" stroke="#c2c2c2" stroke-width="1.1"/><path d="M12 8L15 6L16 9L19 9L18 12L21 14L18 16L18 19L15 18" fill="#d0d0d0" stroke="#c2c2c2"/></svg>
<svg style="left:174.6px;top:984px" width="26" height="26" viewBox="0 0 26 26"><circle cx="9" cy="9" r="3" fill="#5aa7d0" stroke="#1d5f85" stroke-width="1.2"/><path d="M15 14h7l-2.6 2.6v3.4h-1.8v-3.4z" fill="#b04fd0" stroke="#8a2fb0" stroke-width=".5"/></svg>
<svg style="left:202.8px;top:984px" width="26" height="26" viewBox="0 0 26 26"><path d="M8 2V22" stroke="#1d5f85" stroke-width="2"/><path d="M14 14h7l-2.6 2.6v3.4h-1.8v-3.4z" fill="#b04fd0" stroke="#8a2fb0" stroke-width=".5"/></svg>
<svg style="left:227.8px;top:984px" width="26" height="26" viewBox="0 0 26 26"><rect x="5" y="2.5" width="14" height="14" fill="#5aa7d0" stroke="#1d5f85" stroke-width="1.2"/><path d="M16 14h7l-2.6 2.6v3.4h-1.8v-3.4z" fill="#b04fd0" stroke="#8a2fb0" stroke-width=".5"/></svg>
<svg style="left:256.0px;top:984px" width="26" height="26" viewBox="0 0 26 26"><path d="M2 10C6 3 10 2 13 5C16 8 19 5 21 4V13C18 16 15 17 12 14C10 12 8 15 7 19Z" fill="#4a9acb" stroke="#1d5f85" stroke-width="1"/><path d="M17 14h7l-2.6 2.6v3.4h-1.8v-3.4z" fill="#b04fd0" stroke="#8a2fb0" stroke-width=".5"/></svg>
<svg style="left:281.0px;top:984px" width="26" height="26" viewBox="0 0 26 26"><path d="M4 7L13 3L20 6V16L11 21L4 17Z" fill="#5aa7d0" stroke="#1d5f85" stroke-width="1.2"/><path d="M4 7L11 10.5L20 6M11 10.5V21" stroke="#1d5f85" fill="none"/><path d="M16 14h7l-2.6 2.6v3.4h-1.8v-3.4z" fill="#b04fd0" stroke="#8a2fb0" stroke-width=".5"/></svg>
<svg style="left:309.0px;top:984px" width="26" height="26" viewBox="0 0 26 26"><path d="M3 20L20 3" stroke="#1d5f85" stroke-width="2" stroke-dasharray="3 1.5"/><path d="M16 14h7l-2.6 2.6v3.4h-1.8v-3.4z" fill="#b04fd0" stroke="#8a2fb0" stroke-width=".5"/></svg>
<svg style="left:334.0px;top:984px" width="26" height="26" viewBox="0 0 26 26"><path d="M5 6L15 3V19L5 22Z" fill="#8cc0dc" stroke="#1d5f85"/><path d="M10 1V24" stroke="#222" stroke-width="1.2"/><path d="M16 14h7l-2.6 2.6v3.4h-1.8v-3.4z" fill="#b04fd0" stroke="#8a2fb0" stroke-width=".5"/></svg>
<svg style="left:362.0px;top:984px" width="26" height="26" viewBox="0 0 26 26"><rect x="6" y="7" width="5" height="5" fill="#5aa7d0" stroke="#1d5f85"/><path d="M15 14h7l-2.6 2.6v3.4h-1.8v-3.4z" fill="#b04fd0" stroke="#8a2fb0" stroke-width=".5"/></svg>
<svg style="left:388.8px;top:984px" width="26" height="26" viewBox="0 0 26 26"><path d="M8 4H22M8 10H22M8 16H22M14 1V20M20 1V20" stroke="#c8c8c8" stroke-width=".8"/><path d="M22 3H7V14C7 18 10 20 13 20H18" fill="none" stroke="#3f8fbd" stroke-width="2"/><path d="M17 14h7l-2.6 2.6v3.4h-1.8v-3.4z" fill="#b04fd0" stroke="#8a2fb0" stroke-width=".5"/></svg>
<svg style="left:417.0px;top:984px" width="26" height="26" viewBox="0 0 26 26"><path d="M6 5V20M6 5H19" stroke="#1d5f85" stroke-width="1.5" fill="none"/><rect x="4" y="3" width="4" height="4" fill="#fff" stroke="#222"/><rect x="17" y="3" width="4" height="4" fill="#fff" stroke="#222"/><rect x="4" y="18" width="4" height="4" fill="#fff" stroke="#222"/><path d="M16 14h7l-2.6 2.6v3.4h-1.8v-3.4z" fill="#b04fd0" stroke="#8a2fb0" stroke-width=".5"/></svg>
<svg style="left:443.5px;top:984px" width="26" height="26" viewBox="0 0 26 26"><path d="M3 20L20 3" stroke="#1d5f85" stroke-width="1.6"/><rect x="9.5" y="9.5" width="4" height="4" fill="#fff" stroke="#222"/><path d="M16 14h7l-2.6 2.6v3.4h-1.8v-3.4z" fill="#b04fd0" stroke="#8a2fb0" stroke-width=".5"/></svg>
<svg style="left:471.0px;top:984px" width="26" height="26" viewBox="0 0 26 26"><circle cx="12" cy="12" r="6" fill="none" stroke="#1d5f85" stroke-width="1.5"/><circle cx="12" cy="12" r="2.2" fill="#222"/><path d="M12 2V22M2 12H22" stroke="#1d5f85" stroke-width="1"/><path d="M16 14h7l-2.6 2.6v3.4h-1.8v-3.4z" fill="#b04fd0" stroke="#8a2fb0" stroke-width=".5"/></svg>
<svg style="left:498.0px;top:984px" width="26" height="26" viewBox="0 0 26 26"><path d="M5 4H12V20H5ZM12 7H21" fill="none" stroke="#555" stroke-width="1.2"/><path d="M2 12H22" stroke="#1d5f85" stroke-dasharray="2 1.5"/><path d="M16 14h7l-2.6 2.6v3.4h-1.8v-3.4z" fill="#b04fd0" stroke="#8a2fb0" stroke-width=".5"/></svg>
<svg style="left:524.8px;top:984px" width="26" height="26" viewBox="0 0 26 26"><path d="M4 11L15 4L21 12L10 19Z" fill="#fff" stroke="#222" stroke-width="1.6"/><path d="M8 10L10 12.5M11 8L13 10.5M14 6.5L16 9" stroke="#222"/><path d="M16 14h7l-2.6 2.6v3.4h-1.8v-3.4z" fill="#b04fd0" stroke="#8a2fb0" stroke-width=".5"/></svg>
<svg style="left:551.4px;top:984px" width="26" height="26" viewBox="0 0 26 26"><path d="M3 12L8 20L13 4H22" fill="none" stroke="#222" stroke-width="1.7"/><path d="M16 14h7l-2.6 2.6v3.4h-1.8v-3.4z" fill="#b04fd0" stroke="#8a2fb0" stroke-width=".5"/></svg>
<svg style="left:578.0px;top:984px" width="26" height="26" viewBox="0 0 26 26"><rect x="2" y="4" width="22" height="9" fill="#fff" stroke="#333"/><path d="M9 4V13M17 4V13" stroke="#333"/><circle cx="5.5" cy="8.5" r="1.6" fill="none" stroke="#333"/><path d="M17 14h7l-2.6 2.6v3.4h-1.8v-3.4z" fill="#b04fd0" stroke="#8a2fb0" stroke-width=".5"/></svg>
<svg style="left:607.0px;top:984px" width="26" height="26" viewBox="0 0 26 26"><circle cx="13" cy="9" r="6" fill="#fff" stroke="#333" stroke-width="1.3"/><path d="M8.5 13.5L2 20" stroke="#222" stroke-width="2"/><text x="13" y="12" font-size="8" text-anchor="middle" font-family="Liberation Sans,sans-serif" fill="#222">N</text><path d="M17 14h7l-2.6 2.6v3.4h-1.8v-3.4z" fill="#b04fd0" stroke="#8a2fb0" stroke-width=".5"/></svg>
<svg style="left:632.0px;top:984px" width="26" height="26" viewBox="0 0 26 26"><rect x="4" y="3" width="14" height="14" fill="#fff" stroke="#222" stroke-width="1.3"/><text x="11" y="15" font-size="13" text-anchor="middle" font-family="Liberation Serif,serif" fill="#222">A</text><path d="M7 22L11 17L15 22Z" fill="#222"/><path d="M17 14h7l-2.6 2.6v3.4h-1.8v-3.4z" fill="#b04fd0" stroke="#8a2fb0" stroke-width=".5"/></svg>
<svg style="left:660.0px;top:984px" width="26" height="26" viewBox="0 0 26 26"><path d="M2 18L8 8H20M14 8L12 18L21 6" fill="none" stroke="#222" stroke-width="1.8"/><path d="M17 14h7l-2.6 2.6v3.4h-1.8v-3.4z" fill="#b04fd0" stroke="#8a2fb0" stroke-width=".5"/></svg>
<svg style="left:687.0px;top:984px" width="26" height="26" viewBox="0 0 26 26"><path d="M5 3V11H13Z" fill="#8cc0dc" stroke="#1d5f85"/><path d="M5 14C6.5 16 6.5 19 5 21M8.5 14C10 16 10 19 8.5 21M12 14C13.5 16 13.5 19 12 21M15.5 14C17 16 17 19 15.5 21" fill="none" stroke="#333"/><path d="M18 14h7l-2.6 2.6v3.4h-1.8v-3.4z" fill="#b04fd0" stroke="#8a2fb0" stroke-width=".5"/></svg>
<svg style="left:713.7px;top:984px" width="26" height="26" viewBox="0 0 26 26"><path d="M6 12A7 6 0 0 1 20 12Z" fill="#fff" stroke="#333" stroke-width="1.2"/><path d="M8 14L2 20" stroke="#222" stroke-width="2"/><text x="13" y="17" font-size="7" text-anchor="middle" font-family="Liberation Sans,sans-serif" fill="#222">A1</text><path d="M17 14h7l-2.6 2.6v3.4h-1.8v-3.4z" fill="#b04fd0" stroke="#8a2fb0" stroke-width=".5"/></svg>
<svg style="left:740.0px;top:984px" width="26" height="26" viewBox="0 0 26 26"><path d="M7 3V16L12 21L17 16V3" fill="#ddd" stroke="#555"/><path d="M4 3V16M20 3V16M4 3H20" fill="none" stroke="#333" stroke-dasharray="1.5 1.5"/><path d="M17 14h7l-2.6 2.6v3.4h-1.8v-3.4z" fill="#b04fd0" stroke="#8a2fb0" stroke-width=".5"/></svg>
<svg style="left:767.0px;top:984px" width="26" height="26" viewBox="0 0 26 26"><rect x="4" y="3" width="15" height="15" fill="#fff" stroke="#222" stroke-width="1.2"/><text x="10.5" y="16" font-size="13" text-anchor="middle" font-family="Liberation Serif,serif" fill="#222">A</text><circle cx="16" cy="7" r="1.6" fill="none" stroke="#222"/><path d="M17 14h7l-2.6 2.6v3.4h-1.8v-3.4z" fill="#b04fd0" stroke="#8a2fb0" stroke-width=".5"/></svg>
<svg style="left:793.7px;top:984px" width="26" height="26" viewBox="0 0 26 26"><circle cx="12" cy="12" r="8" fill="#fff" stroke="#222" stroke-width="1.3"/><path d="M12 12V4A8 8 0 0 1 20 12ZM12 12V20A8 8 0 0 1 4 12Z" fill="#222"/><path d="M17 14h7l-2.6 2.6v3.4h-1.8v-3.4z" fill="#b04fd0" stroke="#8a2fb0" stroke-width=".5"/></svg>
<svg style="left:822.0px;top:984px" width="26" height="26" viewBox="0 0 26 26"><path d="M2 9H12" stroke="#222" stroke-width="1.6"/><rect x="12" y="4.5" width="9" height="9" fill="#5aa7d0" stroke="#1d5f85"/><path d="M14 14h7l-2.6 2.6v3.4h-1.8v-3.4z" fill="#b04fd0" stroke="#8a2fb0" stroke-width=".5"/></svg>
<svg style="left:848.7px;top:984px" width="26" height="26" viewBox="0 0 26 26"><path d="M2 9H24" stroke="#222" stroke-width="1.6"/><rect x="8" y="4.500" width="9" height="9" fill="#5aa7d0" stroke="#1d5f85"/><path d="M14 14h7l-2.6 2.6v3.4h-1.8v-3.4z" fill="#b04fd0" stroke="#8a2fb0" stroke-width=".5"/></svg>
<svg style="left:875.0px;top:984px" width="26" height="26" viewBox="0 0 26 26"><rect x="1" y="3" width="16" height="16" fill="#5aa7d0" stroke="#1d5f85"/><path d="M10 14l7-9l4 5v6l-5 3z" fill="#fff" stroke="#222" stroke-width=".9"/><path d="M10 14l6-3l5-1M17 5l-1 8l-2 6M13 10l7 3" stroke="#222" stroke-width=".7" fill="none"/><path d="M15 15h7l-2.6 2.6v3.4h-1.8v-3.4z" fill="#b04fd0" stroke="#8a2fb0" stroke-width=".5"/></svg>
<svg style="left:903.7px;top:984px" width="26" height="26" viewBox="0 0 26 26"><path d="M3 3V20" stroke="#1d5f85" stroke-width="1.8"/><path d="M8 13l7-9l4 5v6l-5 3z" fill="#fff" stroke="#222" stroke-width=".9"/><path d="M8 13l6-3l5-1M15 4l-1 8l-2 6M11 9l7 3" stroke="#222" stroke-width=".7" fill="none"/><path d="M12 14h7l-2.6 2.6v3.4h-1.8v-3.4z" fill="#b04fd0" stroke="#8a2fb0" stroke-width=".5"/></svg>
<svg style="left:930.0px;top:984px" width="26" height="26" viewBox="0 0 26 26"><circle cx="4" cy="8" r="2.6" fill="#5aa7d0" stroke="#1d5f85"/><path d="M9 13l7-9l4 5v6l-5 3z" fill="#fff" stroke="#222" stroke-width=".9"/><path d="M9 13l6-3l5-1M16 4l-1 8l-2 6M12 9l7 3" stroke="#222" stroke-width=".7" fill="none"/><path d="M13 14h7l-2.6 2.6v3.4h-1.8v-3.4z" fill="#b04fd0" stroke="#8a2fb0" stroke-width=".5"/></svg>
<svg style="left:0;top:0" width="1919" height="1030" viewBox="0 0 1919 1030"><defs><linearGradient id="cyl" gradientUnits="userSpaceOnUse" x1="871.6" y1="435.6" x2="846.2" y2="529.0"><stop offset="0" stop-color="#fff"/><stop offset=".53" stop-color="#fff"/><stop offset=".65" stop-color="#f2f2ff"/><stop offset=".73" stop-color="#d0d0ec"/><stop offset=".81" stop-color="#8a8a9e"/><stop offset=".88" stop-color="#4e505c"/><stop offset=".94" stop-color="#464851"/><stop offset="1" stop-color="#585a64"/></linearGradient></defs>
<path d="M871.6 435.6L1069.4 489.9C1068.1 490.6 1064.2 491.2 1061.3 494.0C1058.4 496.8 1054.7 501.8 1052.0 506.8C1049.2 511.9 1046.6 518.8 1045.0 524.3C1043.3 529.8 1042.5 537.4 1042.1 540.0L1021.7 535.9C1022.4 538.1 1024.4 544.5 1026.3 548.8C1028.3 553.0 1030.8 557.4 1033.3 561.6C1035.8 565.8 1040.1 571.8 1041.5 573.8L1022.2 569.7L1031.0 577.3L846.2 529.0A48.4 19.2 105.17 0 1 871.6 435.6Z" fill="url(#cyl)" stroke="#000" stroke-width="1.1" stroke-linejoin="round"/>
<path d="M1299.1 551.5L1103.8 498.6C1102.6 499.1 1098.7 499.8 1096.2 501.6C1093.8 503.3 1091.2 506.9 1089.3 509.1C1087.3 511.4 1086.0 512.2 1084.6 515.0C1083.1 517.7 1081.8 522.0 1080.5 525.5C1079.3 529.0 1077.9 531.9 1077.0 535.9C1076.1 540.0 1075.6 547.6 1075.3 549.9L1054.9 544.7C1055.3 546.3 1055.6 550.4 1057.2 554.6C1058.9 558.8 1061.9 565.0 1064.8 569.7C1067.7 574.5 1073.0 580.9 1074.7 583.1L1054.9 578.5C1055.7 579.6 1057.5 582.9 1060.1 584.9C1062.7 586.9 1067.3 589.1 1070.6 590.4C1073.9 591.6 1078.4 592.1 1079.9 592.5L1273.7 644.9Z" fill="url(#cyl)" stroke="#000" stroke-width="1.1" stroke-linejoin="round"/>
<ellipse cx="1286.4" cy="598.2" rx="21.3" ry="48.4" transform="rotate(15.17 1286.4 598.2)" fill="#a19ac0" stroke="#000" stroke-width="1.2"/>
<path d="M1069.4 489.9C1071.0 490.4 1076.4 491.1 1078.8 492.8C1081.1 494.6 1082.6 499.1 1083.4 500.4L1042.1 540.0C1042.5 537.4 1043.3 529.8 1045.0 524.3C1046.6 518.8 1049.2 511.9 1052.0 506.8C1054.7 501.8 1058.4 496.8 1061.3 494.0C1064.2 491.2 1068.1 490.6 1069.4 489.9Z" fill="#dcc800" stroke="#000" stroke-width="1" stroke-linejoin="round"/>
<path d="M1021.7 535.9L1042.1 540.0L1073.9 510.1L1078.8 519.0L1084.6 515.0C1083.9 516.7 1081.8 522.0 1080.5 525.5C1079.3 529.0 1077.9 531.9 1077.0 535.9C1076.1 540.0 1075.6 547.6 1075.3 549.9L1054.9 544.7C1055.3 546.3 1055.6 550.4 1057.2 554.6C1058.9 558.8 1061.9 565.0 1064.8 569.7C1067.7 574.5 1073.0 580.9 1074.7 583.1L1054.9 578.5C1053.6 579.2 1049.9 582.0 1047.3 582.6C1044.7 583.1 1041.9 582.5 1039.1 581.6C1036.4 580.8 1033.8 579.3 1031.0 577.3C1028.2 575.3 1023.7 571.0 1022.2 569.7L1041.5 573.8C1040.1 571.8 1035.8 565.8 1033.3 561.6C1030.8 557.4 1028.3 553.0 1026.3 548.8C1024.4 544.5 1022.4 538.1 1021.7 535.9Z" fill="#ffff00" stroke="#000" stroke-width="1" stroke-linejoin="round"/>
<path d="M1054.9 544.7L1078.8 519.0" stroke="#000" stroke-width="1" fill="none"/>
<path d="M1041.5 573.8L1058.4 559.3" stroke="#000" stroke-width="1" fill="none"/>
<path d="M1054.9 578.5L1064.8 569.7" stroke="#000" stroke-width="1" fill="none"/>
<path d="M1073.5 540.6L1073.5 513.2M1073.5 540.6L1087.5 543.9" stroke="#0000ff" stroke-width="1.1" fill="none"/>
<path d="M1071.3 517.7L1073.5 512.2L1075.7 517.7Z" fill="#0000ff"/>
<path d="M1082.5 540.9L1088.5 544.2L1082.0 545.4Z" fill="#0000ff"/>
<path d="M1070.5 537.6L1076.5 543.6M1076.5 537.6L1070.5 543.6M1070.0 540.6H1077.0" stroke="#0000ff" stroke-width=".9" fill="none"/>
</svg><svg style="left:727.0px;top:120.5px" width="24" height="24" viewBox="0 0 24 24"><path d="M3 21L9 15" stroke="#2d6a92" stroke-width="3.4" stroke-linecap="round"/><path d="M3 21L9 15" stroke="#9fd0ea" stroke-width="1.500" stroke-linecap="round"/><circle cx="14" cy="10" r="7" fill="#d4eaf5" fill-opacity=".9" stroke="#2b4c63" stroke-width="1.300"/><path d="M14 10m-4 -1a4.200 4.200 0 0 1 4 -3.500" fill="none" stroke="#fff" stroke-width="1.200" stroke-opacity=".9"/><path d="M14 5.5l1.8 2.2h-3.6zM14 14.500l1.800-2.200h-3.600zM9.500 10l2.200-1.800v3.600zM18.500 10l-2.200-1.800v3.600z" fill="#33566d"/></svg>
<svg style="left:752.5px;top:120.5px" width="24" height="24" viewBox="0 0 24 24"><path d="M12 2l3.500 4h-2.300v4.800h4.800V8.500l4 3.500l-4 3.500v-2.300h-4.800v4.800h2.300L12 22l-3.500-4h2.300v-4.800H6v2.300L2 12l4-3.500v2.300h4.800V6H8.500z" fill="#a9d4ea" stroke="#1f4a66" stroke-width="1"/></svg>
<svg style="left:778.0px;top:120.5px" width="24" height="24" viewBox="0 0 24 24"><path d="M8 20L12 16" stroke="#2d6a92" stroke-width="3.4" stroke-linecap="round"/><path d="M8 20L12 16" stroke="#9fd0ea" stroke-width="1.500" stroke-linecap="round"/><circle cx="16" cy="10" r="6.5" fill="#d4eaf5" fill-opacity=".9" stroke="#2b4c63" stroke-width="1.300"/><path d="M16 10m-4 -1a4.200 4.200 0 0 1 4 -3.500" fill="none" stroke="#fff" stroke-width="1.200" stroke-opacity=".9"/><path d="M4 4V18" stroke="#222" stroke-width="1.5"/><path d="M4 1.500l2.500 3.500h-5zM4 20.500l2.500-3.500h-5z" fill="#222"/></svg>
<svg style="left:804.0px;top:120.5px" width="24" height="24" viewBox="0 0 24 24"><path d="M3 21L8 16" stroke="#2d6a92" stroke-width="3.4" stroke-linecap="round"/><path d="M3 21L8 16" stroke="#9fd0ea" stroke-width="1.500" stroke-linecap="round"/><circle cx="13" cy="11" r="6.5" fill="#d4eaf5" fill-opacity=".9" stroke="#2b4c63" stroke-width="1.300"/><path d="M13 11m-4 -1a4.200 4.200 0 0 1 4 -3.500" fill="none" stroke="#fff" stroke-width="1.200" stroke-opacity=".9"/><rect x="5.500" y="3" width="16" height="14" fill="none" stroke="#222" stroke-width="1.200" stroke-dasharray="4 2.500"/></svg>
<svg style="left:830.0px;top:120.5px;opacity:0.28" width="24" height="24" viewBox="0 0 24 24"><path d="M3 21L9 15" stroke="#2d6a92" stroke-width="3.4" stroke-linecap="round"/><path d="M3 21L9 15" stroke="#9fd0ea" stroke-width="1.500" stroke-linecap="round"/><circle cx="14" cy="10" r="6.5" fill="#d4eaf5" fill-opacity=".9" stroke="#2b4c63" stroke-width="1.300"/><path d="M14 10m-4 -1a4.200 4.200 0 0 1 4 -3.500" fill="none" stroke="#fff" stroke-width="1.200" stroke-opacity=".9"/><path d="M11 8h6M11 11h6" stroke="#33566d"/></svg>
<svg style="left:856.0px;top:120.5px" width="24" height="24" viewBox="0 0 24 24"><g transform="rotate(-32 12 12)"><path d="M2 9.500L14 8V16L2 14.500Z" fill="#e6e6e0" stroke="#555" stroke-width=".9"/><path d="M14 7L21 8.500V15.500L14 17Z" fill="#cfcfc8" stroke="#555" stroke-width=".9"/><ellipse cx="2.500" cy="12" rx="1.600" ry="2.600" fill="#fff" stroke="#555" stroke-width=".8"/></g><path d="M22 17h-6v-2.500l-5 4l5 4v-2.500h6z" fill="#2f7db2" stroke="#1f4a66" stroke-width=".6"/></svg>
<svg style="left:882.0px;top:120.5px" width="24" height="24" viewBox="0 0 24 24"><path d="M18.500 7A8.500 8.500 0 1 0 20.500 14.500" fill="none" stroke="#2b6890" stroke-width="3.200"/><path d="M18.500 7A8.500 8.500 0 1 0 20.500 14.500" fill="none" stroke="#8cc4e2" stroke-width="1.300"/><path d="M14.500 9.500h8V1.500z" fill="#3d86b5" stroke="#1f4a66" stroke-width=".8"/></svg>
<svg style="left:907.5px;top:120.5px" width="24" height="24" viewBox="0 0 24 24"><path d="M2 18L14 15L22 18.500L9 22Z" fill="#8fc4e0" stroke="#1f4a66" stroke-width=".9"/><path d="M12 18V5" stroke="#222" stroke-width="1.800"/><path d="M12 1.500l3 5h-6z" fill="#222"/></svg>
<svg style="left:933.0px;top:120.5px;opacity:0.35" width="24" height="24" viewBox="0 0 24 24"><path d="M4 9C4 5 9 3 13 4V8C11 8 9 9 9 11V20H4Z" fill="#9ab" stroke="#456" /><path d="M13 4C17 4 20 6 20 9V18H15V10" fill="#bcd" stroke="#456"/></svg>
<svg style="left:959.0px;top:120.5px" width="24" height="24" viewBox="0 0 24 24"><g transform="rotate(-32 12 12)"><path d="M2 9.500L14 8V16L2 14.500Z" fill="#e6e6e0" stroke="#555" stroke-width=".9"/><path d="M14 7L21 8.500V15.500L14 17Z" fill="#cfcfc8" stroke="#555" stroke-width=".9"/><ellipse cx="2.500" cy="12" rx="1.600" ry="2.600" fill="#fff" stroke="#555" stroke-width=".8"/></g><path d="M9 1L16 1.500L12.500 5H16.500L6 12L9 6.500H5.500Z" fill="#f6b21a" stroke="#b06a00" stroke-width=".7"/><text x="18" y="23" font-family="Liberation Serif,serif" font-size="12" text-anchor="middle" fill="#1d4d6e">A</text></svg>
<svg style="left:986.0px;top:120.5px" width="24" height="24" viewBox="0 0 24 24"><path d="M3 8L9 2H22V16L16 22H3Z" fill="#e9f4fa" stroke="#222" stroke-width="1"/><path d="M3 8H16V22H3Z" fill="#4f9dc8" stroke="#1f4a66" stroke-width="1"/><path d="M16 8L22 2" stroke="#222"/><path d="M13.500 3V7M12 5.500l1.500 1.800l1.500-1.800M21 11h-4M18.500 9.500l-1.800 1.500l1.800 1.500" stroke="#222" stroke-width=".8" fill="none"/></svg>
<svg style="left:1014px;top:131.5px" width="6" height="4" viewBox="0 0 6 4"><path d="M0 0H6L3 4Z" fill="#6d8ea3"/></svg>
<svg style="left:1026.5px;top:120.5px" width="24" height="24" viewBox="0 0 24 24"><path d="M4 6L12 3L20 6V18L12 22L4 18Z" fill="#5ba3cb" stroke="#1f4a66" stroke-width="1.100"/><path d="M12 8.500L20 6V18L12 22Z" fill="#eaf4fa" stroke="#1f4a66" stroke-width=".8"/><path d="M4 6L12 8.500V22" fill="none" stroke="#1f4a66" stroke-width=".9"/><path d="M7 8.500V19.500" stroke="#d6ecf7" stroke-width="2"/></svg>
<svg style="left:1054.5px;top:131.5px" width="6" height="4" viewBox="0 0 6 4"><path d="M0 0H6L3 4Z" fill="#6d8ea3"/></svg>
<svg style="left:1066.5px;top:120.5px" width="24" height="24" viewBox="0 0 24 24"><path d="M3 7L12 3L21 6V17L12 21.500L3 18Z M3 7L12 10L21 6M12 10V21.500" fill="#b9dced" fill-opacity=".55" stroke="#3a4d5a" stroke-width="1.100"/><path d="M3 18L12 14L21 17M12 14V3" fill="none" stroke="#3a4d5a" stroke-width=".8" stroke-dasharray="2 1.500"/></svg>
<svg style="left:1092.0px;top:120.5px" width="24" height="24" viewBox="0 0 24 24"><path d="M3 7L12 3L21 6V17L12 21.500L3 18Z" fill="#c4e2f0" fill-opacity=".8" stroke="#3a4d5a" stroke-width="1.100"/><path d="M3 7L12 10L21 6M12 10V21.500" fill="none" stroke="#3a4d5a" stroke-width="1"/></svg>
<svg style="left:1118.0px;top:120.5px" width="24" height="24" viewBox="0 0 24 24"><path d="M3 7L12 3L21 6V17L12 21.500L3 18Z" fill="#7ebfe0"/><path d="M3 7L12 3L21 6L12 10Z" fill="#c5e6f5"/><path d="M12 10L21 6V17L12 21.500Z" fill="#5aa6cf"/></svg>
<div class="a" style="left:1143px;top:119px;width:26px;height:26px;background:#4e7189;border:1px solid #2a3f4e;box-sizing:border-box"></div>
<svg style="left:1144.0px;top:121px" width="24" height="24" viewBox="0 0 24 24"><path d="M4 7L12 3.500L20 6V17L12 21L4 17.500Z" fill="#5aa6cf" stroke="#0e2434" stroke-width="1.500" stroke-linejoin="round"/><path d="M4 7L12 3.500L20 6L12 9.500Z" fill="#a8d8ee" stroke="#0e2434" stroke-width="1"/><path d="M12 9.500V21" stroke="#0e2434" stroke-width="1.200"/></svg>
<svg style="left:1171.0px;top:120.5px" width="24" height="24" viewBox="0 0 24 24"><path d="M2 12C6 5 18 5 22 12C18 19 6 19 2 12Z" fill="#f2f6f8" stroke="#3a4d5a" stroke-width="1"/><circle cx="12" cy="12" r="4.500" fill="#6b7a85"/><circle cx="12" cy="12" r="2.200" fill="#1c262d"/><path d="M12 3V21" stroke="#1c262d" stroke-width="1"/></svg>
<svg style="left:1198px;top:131.5px" width="6" height="4" viewBox="0 0 6 4"><path d="M0 0H6L3 4Z" fill="#6d8ea3"/></svg>
<svg style="left:1209.0px;top:120.5px;opacity:0.5" width="24" height="24" viewBox="0 0 24 24"><circle cx="11" cy="10" r="7.500" fill="#4a86a8"/><path d="M8 22L10 17L19 8L21.500 10.500L12.500 19.500Z" fill="#3f7899" stroke="#5b97b8"/></svg>
<svg style="left:1235.0px;top:120.5px;opacity:0.5" width="24" height="24" viewBox="0 0 24 24"><circle cx="12" cy="9" r="7" fill="#4a86a8"/><path d="M3 22L5 13H19L21 22Z" fill="#5b97b8"/><path d="M5 15h3v3H5zM11 15h3v3h-3zM17 15h3v3h-3zM8 18h3v3H8zM14 18h3v3h-3z" fill="#86b6cf"/></svg>
<svg style="left:1264px;top:131.5px" width="6" height="4" viewBox="0 0 6 4"><path d="M0 0H6L3 4Z" fill="#5b8fab"/></svg>
<svg style="left:1276.0px;top:120.5px" width="24" height="24" viewBox="0 0 24 24"><rect x="2.500" y="3.500" width="19" height="13" fill="#c3d9e5" stroke="#2b3d49" stroke-width="1.400"/><path d="M12 17V20M7 21H17" stroke="#1c262d" stroke-width="2"/></svg>
<svg style="left:1304.5px;top:131.5px" width="6" height="4" viewBox="0 0 6 4"><path d="M0 0H6L3 4Z" fill="#6d8ea3"/></svg>
<svg style="left:1315.5px;top:120.5px;opacity:0.5" width="24" height="24" viewBox="0 0 24 24"><circle cx="12" cy="12" r="7.500" fill="#5b97b8"/><circle cx="10" cy="9.500" r="3" fill="#8dbbd2"/></svg>
<svg style="left:1341.0px;top:120.5px;opacity:0.5" width="24" height="24" viewBox="0 0 24 24"><path d="M4 7L12 4L20 6V17L12 21L4 18Z M4 7L12 9.500L20 6M12 9.500V21" fill="#6aa3c1" stroke="#4d88a8" stroke-width="1"/></svg>
<svg style="left:1369.0px;top:120.5px;opacity:0.5" width="24" height="24" viewBox="0 0 24 24"><circle cx="12" cy="12" r="8" fill="#5b97b8"/><circle cx="13" cy="12" r="4" fill="none" stroke="#8dbbd2" stroke-width="2"/><path d="M3 17L9 14" stroke="#8dbbd2" stroke-width="2"/></svg>
<div class="a" style="left:1393px;top:119px;width:26px;height:26px;background:#58788d;border:1px solid #2a3f4e;box-sizing:border-box"></div>
<svg style="left:1394.0px;top:121px" width="24" height="24" viewBox="0 0 24 24"><path d="M3 8L10 5L19 7V18L11 21.500L3 18.500Z" fill="#e4e4e0" stroke="#3a3a3a" stroke-width="1.200"/><path d="M3 8L11 10.500L19 7M11 10.500V21.500" fill="none" stroke="#3a3a3a" stroke-width="1"/><path d="M14 1L22 1.500L18 5.500H22L10 14L13.500 7.500H10Z" fill="#f6a81a" stroke="#c05a00" stroke-width=".7"/></svg>
<svg style="left:235px;top:150px" width="6" height="8" viewBox="0 0 6 8"><path d="M0 0L5 4L0 8Z" fill="#1d2d38"/></svg>
<svg style="left:252px;top:145px" width="19" height="19" viewBox="0 0 20 20"><path d="M1.500 6L7.500 2L12 4.200V8L18.500 11.200V15L11 19.500L1.500 13.500Z" fill="#f4d23e" stroke="#5e4d08" stroke-width="1.100" stroke-linejoin="round"/><path d="M1.500 6L6.500 8.800L12 5.200M6.500 8.800V12L11 15L18.500 11.200M11 15V19.500M6.500 12L12 8" fill="none" stroke="#7a6510" stroke-width=".9"/></svg>
<div class="t" style="left:275px;top:149px;font-size:11.500px;color:#0c1c28">JOE零件1</div>
<svg style="left:1789px;top:125px" width="12" height="13" viewBox="0 0 12 13"><rect x=".6" y=".6" width="10.800" height="11.800" fill="none" stroke="#4f86a6" stroke-width="1.200"/><path d="M.6 1.600H11.400" stroke="#4f86a6" stroke-width="1.800"/><path d="M6 4.500L3 7.500L6 10.500Z" fill="#4f86a6"/></svg>
<svg style="left:1816px;top:125px" width="12" height="13" viewBox="0 0 12 13"><rect x=".6" y=".6" width="10.800" height="11.800" fill="none" stroke="#4f86a6" stroke-width="1.200"/><path d="M.6 1.600H11.400" stroke="#4f86a6" stroke-width="1.800"/><path d="M6.500 4.500L9.500 7.500L6.500 10.500Z" fill="#4f86a6"/></svg>
<div class="a" style="left:1843px;top:136px;width:10px;height:2px;background:#4f86a6"></div>
<svg style="left:1867px;top:125px" width="15" height="13" viewBox="0 0 15 13"><path d="M4 4V1H14V9H10" fill="none" stroke="#4f86a6" stroke-width="1.300"/><rect x=".7" y="4.500" width="9.500" height="7.800" fill="none" stroke="#4f86a6" stroke-width="1.300"/></svg>
<svg style="left:1895px;top:127px" width="10" height="10" viewBox="0 0 10 10"><path d="M.5 .5L9.500 9.500M9.500 .5L.5 9.500" stroke="#4f86a6" stroke-width="1.200"/></svg>
<svg style="left:1816px;top:152px" width="30" height="24" viewBox="0 0 30 24"><path d="M2 12L11 21L28 4" fill="none" stroke="#57b08c" stroke-opacity=".75" stroke-width="5"/></svg>
<svg style="left:1862px;top:182px" width="24" height="24" viewBox="0 0 24 24"><path d="M3 3L21 21M21 3L3 21" stroke="#6f8fae" stroke-opacity=".85" stroke-width="6"/></svg>
<div class="a" style="left:1894px;top:168px;width:25px;height:168px;background:#d6d6d6;border:1px solid #9a9a9a;border-right:none;box-sizing:border-box"></div>
<div class="a" style="left:1895px;top:169px;width:24px;height:23px;background:#fdfdfd"></div>
<div class="a" style="left:1895px;top:191px;width:24px;height:1px;background:#a5a5a5"></div>
<div class="a" style="left:1895px;top:215px;width:24px;height:1px;background:#a5a5a5"></div>
<div class="a" style="left:1895px;top:239px;width:24px;height:1px;background:#a5a5a5"></div>
<div class="a" style="left:1895px;top:263px;width:24px;height:1px;background:#a5a5a5"></div>
<div class="a" style="left:1895px;top:287px;width:24px;height:1px;background:#a5a5a5"></div>
<div class="a" style="left:1895px;top:311px;width:24px;height:1px;background:#a5a5a5"></div>
<svg style="left:1897px;top:170px" width="20" height="20" viewBox="0 0 20 20"><path d="M1.500 10L10 2L18.500 10" fill="none" stroke="#1d5a85" stroke-width="1.800"/><path d="M4 9.500V18H16V9.500" fill="none" stroke="#444" stroke-width="1.300"/><rect x="8.500" y="12" width="3.500" height="6" fill="#fff" stroke="#444"/></svg>
<svg style="left:1897px;top:194px" width="20" height="20" viewBox="0 0 20 20"><path d="M3 5L7 3V16L3 18ZM7 3L11 2V16L7 17.500M11 2L15 3.500V17L11 18.500" fill="#f4f4f4" stroke="#333" stroke-width="1.100"/><path d="M15 3.500L17 5V16L15 17" fill="#ddd" stroke="#333"/></svg>
<svg style="left:1897px;top:218px" width="20" height="20" viewBox="0 0 20 20"><path d="M2 17V3H8L10 5H16V8" fill="#f4f4f4" stroke="#444" stroke-width="1.100"/><path d="M2 17L5 8H19L16 17Z" fill="#fff" stroke="#444" stroke-width="1.100"/></svg>
<svg style="left:1897px;top:242px" width="20" height="20" viewBox="0 0 20 20"><rect x="1.500" y="2.500" width="17" height="15" rx="1.500" fill="#f4f4f4" stroke="#444" stroke-width="1.100"/><path d="M4 5.500H11V8H9V12H13V15H4V12H7V8H4Z" fill="#f2c81e" stroke="#8a6a00" stroke-width=".7"/><rect x="13" y="5" width="3.500" height="2.500" fill="#f2c81e" stroke="#8a6a00" stroke-width=".6"/><rect x="15" y="10" width="2" height="6" fill="#bbb" stroke="#666" stroke-width=".5"/></svg>
<svg style="left:1897px;top:266px" width="20" height="20" viewBox="0 0 20 20"><defs><clipPath id="cb2"><circle cx="10" cy="10" r="8"/></clipPath></defs><g clip-path="url(#cb2)"><rect width="20" height="20" fill="#e8c020"/><path d="M0 0H10V10L0 11Z" fill="#2a6fd0"/><path d="M10 0H20V11L10 10Z" fill="#d02a20"/><path d="M0 11L8 10L10 20H0Z" fill="#38a030"/><rect width="20" height="20" fill="url(#cbg)"/></g></svg>
<svg style="left:1897px;top:290px" width="20" height="20" viewBox="0 0 20 20"><rect x="1.500" y="1.500" width="17" height="17" fill="#fff" stroke="#2b4d66" stroke-width="1.100"/><rect x="1.500" y="1.500" width="17" height="3" fill="#4d8fbf"/><rect x="4" y="7" width="3.500" height="2" fill="#2f78ad"/><rect x="4" y="11" width="3.500" height="2" fill="#2f78ad"/><rect x="4" y="15" width="3.500" height="1.500" fill="#2f78ad"/><path d="M9.500 8H16M9.500 12H16M9.500 15.700H16" stroke="#333"/></svg>
<svg style="left:1897px;top:314px" width="20" height="20" viewBox="0 0 20 20"><path d="M2 2H13V10H7L4 13V10H2Z" fill="#3d8cc0" stroke="#1d4d6e" stroke-width="1"/><path d="M9 8H18V15H16V18L13 15H9Z" fill="#f4f4f4" stroke="#555" stroke-width="1"/></svg><svg style="left:240px;top:862px" width="75" height="70" viewBox="240 862 75 70">
<defs><linearGradient id="tg" x1="0" x2="1"><stop offset="0" stop-color="#0a5a0a"/><stop offset=".5" stop-color="#3aa03a"/><stop offset="1" stop-color="#0a5a0a"/></linearGradient></defs>
<path d="M270.300 907L258.500 917.500" stroke="#0000c8" stroke-width="3.400"/><path d="M255.500 914.500l6.500 0l1 5l-4 2.800l-4-1.500z" fill="#0000d8"/>
<path d="M270.300 907L288 911.800" stroke="#b80000" stroke-width="3.400"/><path d="M287 908.300L296.500 914.300L286 916Z" fill="#c00000"/>
<rect x="268.300" y="888" width="4" height="19.500" fill="url(#tg)"/><path d="M266.300 890.500L270.300 881.500L274.300 890.500Z" fill="#1d8a1d"/><ellipse cx="270.300" cy="890.300" rx="4" ry="1.600" fill="#0a5a0a"/>
<text x="270.300" y="876.500" font-family="Liberation Sans,sans-serif" font-size="9" text-anchor="middle" fill="#008000" font-weight="bold">Y</text>
<text x="302.500" y="916" font-family="Liberation Sans,sans-serif" font-size="9" text-anchor="middle" fill="#f04050">X</text>
<text x="253.500" y="923.500" font-family="Liberation Sans,sans-serif" font-size="9" text-anchor="middle" fill="#1a1aff" font-weight="bold">Z</text>
</svg>
<div class="t" style="left:241.5px;top:948.6px;font-size:13px;font-weight:bold;letter-spacing:1.3px;color:#000">*上下二等角轴测</div>
<svg style="left:0;top:0" width="1919" height="1030" viewBox="0 0 1919 1030" font-family="'DejaVu Sans Light','DejaVu Sans',sans-serif" font-style="italic" fill="#111" stroke="#111" stroke-width=".5">
<text x="1318" y="873" font-size="30.5" textLength="352" lengthAdjust="spacingAndGlyphs" transform="rotate(-1.500 1318 873)">SENSNOW SOFTWARE</text>
<text x="1313" y="913" font-size="28.5" textLength="546" lengthAdjust="spacingAndGlyphs" transform="rotate(-1 1313 913)">PRINCIPAL INVESTIGATOR / JOE.</text>
<text x="1784" y="96.500" font-size="41" textLength="125" lengthAdjust="spacingAndGlyphs" transform="rotate(-1.500 1784 97)" stroke="#111" stroke-width="1.300">2025</text>
</svg>
<div class="wm" style="left:62px;top:148px;opacity:.55;transform:translate(-50%,-50%) rotate(-37deg)"><span style="font-size:35px;margin-left:-12px;letter-spacing:1.2px">Senshow</span><br><span style="letter-spacing:2.200px;margin-left:18px">新思诺软件</span></div>
<div class="wm" style="left:776px;top:157px;transform:translate(-50%,-50%) rotate(-31deg)"><span style="font-size:35px;margin-left:-12px;letter-spacing:1.2px">Senshow</span><br><span style="letter-spacing:2.200px;margin-left:18px">新思诺软件</span></div>
<div class="wm" style="left:1400px;top:160px;transform:translate(-50%,-50%) rotate(-31deg)"><span style="font-size:35px;margin-left:-12px;letter-spacing:1.2px">Senshow</span><br><span style="letter-spacing:2.200px;margin-left:18px">新思诺软件</span></div>
<div class="wm" style="left:362px;top:355px;transform:translate(-50%,-50%) rotate(-31deg)"><span style="font-size:35px;margin-left:-12px;letter-spacing:1.2px">Senshow</span><br><span style="letter-spacing:2.200px;margin-left:18px">新思诺软件</span></div>
<div class="wm" style="left:1075px;top:347px;transform:translate(-50%,-50%) rotate(-31deg)"><span style="font-size:35px;margin-left:-12px;letter-spacing:1.2px">Senshow</span><br><span style="letter-spacing:2.200px;margin-left:18px">新思诺软件</span></div>
<div class="wm" style="left:1690px;top:350px;transform:translate(-50%,-50%) rotate(-31deg)"><span style="font-size:35px;margin-left:-12px;letter-spacing:1.2px">Senshow</span><br><span style="letter-spacing:2.200px;margin-left:18px">新思诺软件</span></div>
<div class="wm" style="left:718px;top:565px;transform:translate(-50%,-50%) rotate(-31deg)"><span style="font-size:35px;margin-left:-12px;letter-spacing:1.2px">Senshow</span><br><span style="letter-spacing:2.200px;margin-left:18px">新思诺软件</span></div>
<div class="wm" style="left:1345px;top:560px;transform:translate(-50%,-50%) rotate(-31deg)"><span style="font-size:35px;margin-left:-12px;letter-spacing:1.2px">Senshow</span><br><span style="letter-spacing:2.200px;margin-left:18px">新思诺软件</span></div>
<div class="wm" style="left:18px;top:548px;opacity:.55;transform:translate(-50%,-50%) rotate(-31deg)"><span style="font-size:35px;margin-left:-12px;letter-spacing:1.2px">Senshow</span><br><span style="letter-spacing:2.200px;margin-left:18px">新思诺软件</span></div>
<div class="wm" style="left:340px;top:742px;transform:translate(-50%,-50%) rotate(-31deg)"><span style="font-size:35px;margin-left:-12px;letter-spacing:1.2px">Senshow</span><br><span style="letter-spacing:2.200px;margin-left:18px">新思诺软件</span></div>
<div class="wm" style="left:1055px;top:719px;transform:translate(-50%,-50%) rotate(-31deg)"><span style="font-size:35px;margin-left:-12px;letter-spacing:1.2px">Senshow</span><br><span style="letter-spacing:2.200px;margin-left:18px">新思诺软件</span></div>
<div class="wm" style="left:1670px;top:725px;transform:translate(-50%,-50%) rotate(-31deg)"><span style="font-size:35px;margin-left:-12px;letter-spacing:1.2px">Senshow</span><br><span style="letter-spacing:2.200px;margin-left:18px">新思诺软件</span></div>
<div class="wm" style="left:695px;top:935px;opacity:.55;transform:translate(-50%,-50%) rotate(-31deg)"><span style="font-size:35px;margin-left:-12px;letter-spacing:1.2px">Senshow</span><br><span style="letter-spacing:2.200px;margin-left:18px">新思诺软件</span></div>
<div class="wm" style="left:1320px;top:940px;opacity:.55;transform:translate(-50%,-50%) rotate(-31deg)"><span style="font-size:35px;margin-left:-12px;letter-spacing:1.2px">Senshow</span><br><span style="letter-spacing:2.200px;margin-left:18px">新思诺软件</span></div>
<div class="wm" style="left:28px;top:935px;opacity:.55;transform:translate(-50%,-50%) rotate(-31deg)"><span style="font-size:35px;margin-left:-12px;letter-spacing:1.2px">Senshow</span><br><span style="letter-spacing:2.200px;margin-left:18px">新思诺软件</span></div>
<div class="wm" style="left:1905px;top:915px;opacity:.55;transform:translate(-50%,-50%) rotate(-31deg)"><span style="font-size:35px;margin-left:-12px;letter-spacing:1.2px">Senshow</span><br><span style="letter-spacing:2.200px;margin-left:18px">新思诺软件</span></div>
<div class="hl" style="left:37.5px;top:252.5px;width:42px;height:29px;border-width:3px;border-radius:6px"></div>
<div class="hl" style="left:0.5px;top:450px;width:230.5px;height:205.5px;border-width:4px;border-radius:15px"></div>
<div class="hl" style="left:0px;top:681px;width:230.5px;height:35.5px;border-width:3.5px;border-radius:16px"></div>
<svg style="left:0;top:0;filter:drop-shadow(1px 2px 2px rgba(0,0,0,.45))" width="1919" height="1030" viewBox="0 0 1919 1030"><path d="M141.6 242.2H452.5A11 11 0 0 1 463.5 253.2V315.4A11 11 0 0 1 452.5 326.4H141.6A11 11 0 0 1 130.6 315.4V272L80 261L130.6 262V253.2A11 11 0 0 1 141.6 242.2Z" fill="#62218a" stroke="#f0444e" stroke-width="2.6" stroke-linejoin="round"/></svg>
<div class="t" style="left:159.6px;top:267.3px;font-size:37.7px;color:#fff;font-family:'Liberation Sans','Noto Sans CJK SC',sans-serif">切换样式选项卡.</div>
<svg style="left:0;top:0;filter:drop-shadow(1px 2px 2px rgba(0,0,0,.45))" width="1919" height="1030" viewBox="0 0 1919 1030"><path d="M292 482.2H494A11 11 0 0 1 505 493.2V540.4A11 11 0 0 1 494 551.4H292A11 11 0 0 1 281 540.4V512L231 502L281 501.5V493.2A11 11 0 0 1 292 482.2Z" fill="#62218a" stroke="#f0444e" stroke-width="2.6" stroke-linejoin="round"/></svg>
<div class="t" style="left:311.5px;top:500.3px;font-size:37.8px;color:#fff;font-family:'Liberation Sans','Noto Sans CJK SC',sans-serif">设定样式.</div>
<svg style="left:0;top:0;filter:drop-shadow(1px 2px 2px rgba(0,0,0,.45))" width="1919" height="1030" viewBox="0 0 1919 1030"><path d="M292.5 679.2H564.5A11 11 0 0 1 575.5 690.2V743.8A11 11 0 0 1 564.5 754.8H292.5A11 11 0 0 1 281.5 743.8V708L231 698.3L281.5 697.5V690.2A11 11 0 0 1 292.5 679.2Z" fill="#62218a" stroke="#f0444e" stroke-width="2.6" stroke-linejoin="round"/></svg>
<div class="t" style="left:310.2px;top:700.6px;font-size:37.7px;color:#fff;font-family:'Liberation Sans','Noto Sans CJK SC',sans-serif">设置断裂间隙.</div>
</body></html>
